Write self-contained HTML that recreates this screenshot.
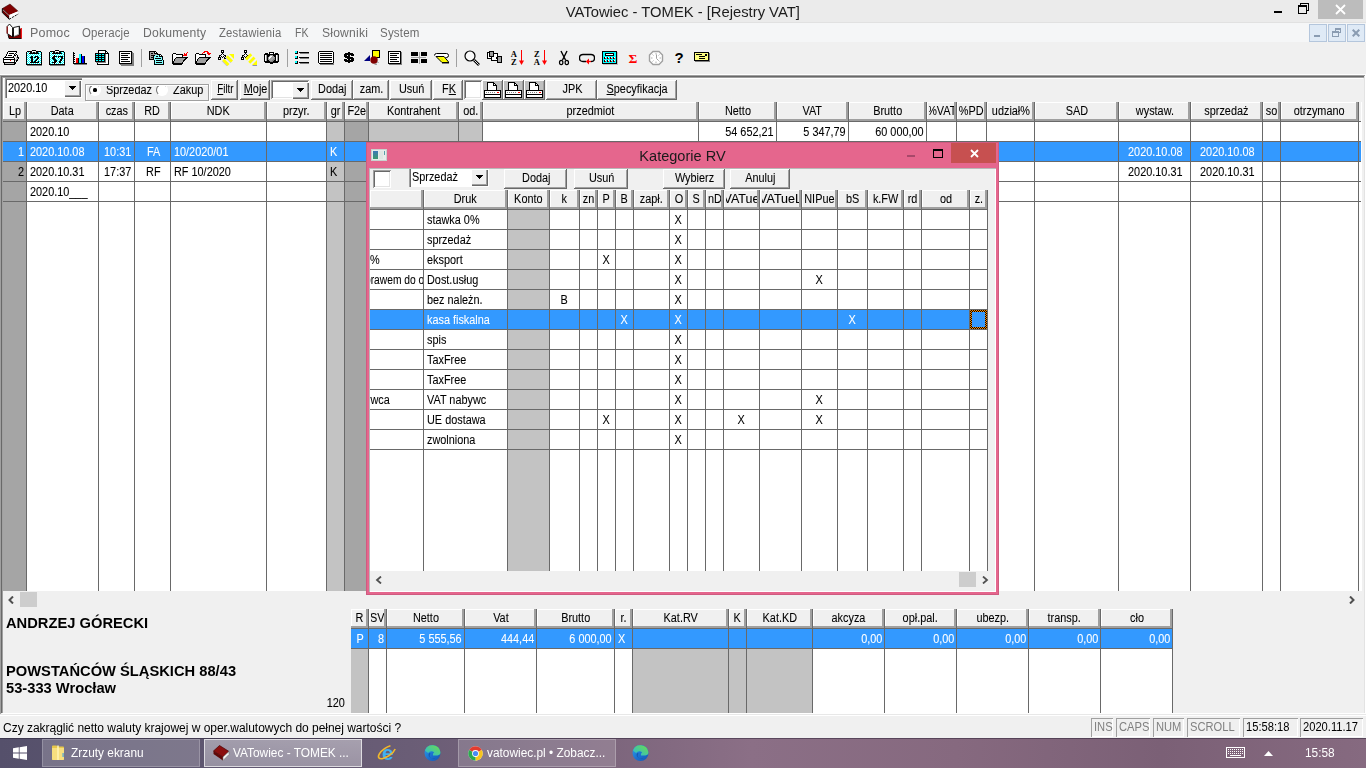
<!DOCTYPE html>
<html><head><meta charset="utf-8"><title>VATowiec</title><style>
*{box-sizing:border-box;margin:0;padding:0}
html,body{width:1366px;height:768px;overflow:hidden;background:#f0f0f0}
body{font-family:"Liberation Sans",sans-serif;position:relative}
body div,body svg{position:absolute}
.t{white-space:nowrap;color:#000;will-change:transform}
.t span{display:inline-block}
.g{font-size:12.5px;-webkit-text-stroke:.08px}
.g span{transform:scaleX(0.87)}
.l{text-align:left}.l span{transform-origin:0 50%}
.r{text-align:right}.r span{transform-origin:100% 50%}
.c{text-align:center;display:flex;justify-content:center}.c span{transform-origin:50% 50%;flex:none}
.title{font-size:15px;color:#1c1c1c}
.title span{transform:scaleX(.985)}
.menu{font-size:12.5px;color:#6d6d6d;letter-spacing:0.2px}
.b{font-size:14px;font-weight:bold}
.b span{transform:scaleX(1.05)}
.st{font-size:12px}
.sc span{transform:scaleX(.93)}
.tb{font-size:12.5px;color:#fff}
.dtitle{font-size:15px;color:#1a1a1a}
.dtitle span{transform:scaleX(.97)}
u{text-decoration:underline}
</style></head><body>
<div style="left:0px;top:0px;width:1366px;height:768px;background:#f0f0f0;"></div>
<div style="left:0px;top:0px;width:1366px;height:22px;background:#ebebeb;"></div>
<div style="left:0px;top:22px;width:1366px;height:1px;background:#e1e1e1;"></div>
<div class="t title c" style="left:0px;top:1px;width:1366px;height:22px;line-height:22px;"><span>VATowiec - TOMEK - [Rejestry VAT]</span></div>
<div style="left:1274px;top:11px;width:8px;height:2px;background:#000;"></div>
<svg style="left:1298px;top:3px" width="11" height="11" viewBox="0 0 11 11" shape-rendering="crispEdges"><path d="M2.5 2.5v-2h8v7h-2" fill="none" stroke="#000"/><rect x="0.5" y="3" width="8" height="7.5" fill="none" stroke="#000"/><rect x="0" y="2" width="9" height="2" fill="#000"/></svg>
<div style="left:1318px;top:0px;width:45px;height:19px;background:#bcbcbc;"></div>
<svg style="left:1335px;top:4px" width="11" height="11" viewBox="0 0 11 11"><path d="M1 1l9 9M10 1l-9 9" stroke="#fff" stroke-width="1.8"/></svg>
<div style="left:0px;top:23px;width:1366px;height:19px;background:#f5f6f7;"></div>
<div class="t menu l" style="left:30px;top:24px;width:100px;height:19px;line-height:19px"><span style="transform:scaleX(1.0)">Pomoc</span></div>
<div class="t menu l" style="left:82px;top:24px;width:100px;height:19px;line-height:19px"><span style="transform:scaleX(0.915)">Operacje</span></div>
<div class="t menu l" style="left:143px;top:24px;width:100px;height:19px;line-height:19px"><span style="transform:scaleX(0.975)">Dokumenty</span></div>
<div class="t menu l" style="left:218.5px;top:24px;width:100px;height:19px;line-height:19px"><span style="transform:scaleX(0.905)">Zestawienia</span></div>
<div class="t menu l" style="left:295.3px;top:24px;width:100px;height:19px;line-height:19px"><span style="transform:scaleX(0.84)">FK</span></div>
<div class="t menu l" style="left:322.2px;top:24px;width:100px;height:19px;line-height:19px"><span style="transform:scaleX(0.97)">Słowniki</span></div>
<div class="t menu l" style="left:380px;top:24px;width:100px;height:19px;line-height:19px"><span style="transform:scaleX(0.925)">System</span></div>
<div style="left:1309px;top:24px;width:18px;height:18px;background:#dfeaf6;box-shadow:inset 0 0 0 1px #b4c6dc;"></div>
<div style="left:1328px;top:24px;width:18px;height:18px;background:#dfeaf6;box-shadow:inset 0 0 0 1px #b4c6dc;"></div>
<div style="left:1347px;top:24px;width:18px;height:18px;background:#dfeaf6;box-shadow:inset 0 0 0 1px #b4c6dc;"></div>
<div style="left:1314px;top:35px;width:6px;height:2px;background:#8a9cb2;"></div>
<svg style="left:1332px;top:28px" width="10" height="9" viewBox="0 0 10 9" shape-rendering="crispEdges"><path d="M3 0h6v5h-2v-1h1v-2h-4v1h-1z" fill="#8a9cb2"/><path d="M0 3h7v6h-7zM1 5v3h5v-3z" fill="#8a9cb2" fill-rule="evenodd"/></svg>
<svg style="left:1352px;top:29px" width="8" height="8" viewBox="0 0 8 8"><path d="M0.7 0.7l6.6 6.6M7.3 0.7l-6.6 6.6" stroke="#8a9cb2" stroke-width="2"/></svg>
<div style="left:141px;top:49px;width:1px;height:18px;background:#a0a0a0;"></div>
<div style="left:287px;top:49px;width:1px;height:18px;background:#a0a0a0;"></div>
<div style="left:456px;top:49px;width:1px;height:18px;background:#a0a0a0;"></div>
<svg style="left:3px;top:51px" width="16" height="14" viewBox="0 0 16 14" shape-rendering="crispEdges"><path fill="#000" d="M5 0h9v1h-9zM4 1h1v1h-1zM13 1h1v1h-1zM4 2h1v1h-1zM6 2h5v1h-5zM12 2h1v1h-1zM3 3h1v1h-1zM11 3h1v1h-1zM13 3h1v1h-1zM3 4h1v1h-1zM5 4h4v1h-4zM11 4h2v1h-2zM14 4h1v1h-1zM2 5h1v1h-1zM10 5h1v1h-1zM14 5h1v1h-1zM1 6h10v1h-10zM14 6h2v1h-2zM0 7h1v1h-1zM11 7h1v1h-1zM15 7h1v1h-1zM0 8h12v1h-12zM14 8h1v1h-1zM0 9h1v1h-1zM11 9h1v1h-1zM13 9h2v1h-2zM0 10h1v1h-1zM11 10h1v1h-1zM13 10h1v1h-1zM0 11h13v1h-13zM1 12h1v1h-1zM11 12h2v1h-2zM1 13h11v1h-11z"/><path fill="#fff" d="M5 1h8v1h-8zM5 2h1v1h-1zM11 2h1v1h-1zM4 3h7v1h-7zM4 4h1v1h-1zM9 4h2v1h-2zM13 4h1v1h-1zM3 5h7v1h-7zM11 5h1v1h-1zM13 5h1v1h-1zM12 6h1v1h-1zM1 7h10v1h-10zM12 7h1v1h-1zM1 9h6v1h-6zM8 9h3v1h-3zM1 10h10v1h-10zM12 10h1v1h-1z"/><path fill="#c0c0c0" d="M12 5h1v1h-1zM11 6h1v1h-1zM13 6h1v1h-1zM13 7h2v1h-2zM12 8h2v1h-2zM12 9h1v1h-1zM2 12h9v1h-9z"/><path fill="#ff0000" d="M7 9h1v1h-1z"/></svg>
<svg style="left:26px;top:50px" width="16" height="16" viewBox="0 0 16 16" shape-rendering="crispEdges"><path fill="#000" d="M6 0h4v1h-4zM1 1h5v1h-5zM10 1h5v1h-5zM0 2h1v1h-1zM4 2h2v1h-2zM7 2h2v1h-2zM10 2h2v1h-2zM15 2h1v1h-1zM0 3h1v1h-1zM3 3h10v1h-10zM15 3h1v1h-1zM0 4h1v1h-1zM15 4h1v1h-1zM0 5h1v1h-1zM15 5h1v1h-1zM0 6h1v1h-1zM5 6h2v1h-2zM9 6h3v1h-3zM15 6h1v1h-1zM0 7h1v1h-1zM4 7h3v1h-3zM8 7h2v1h-2zM11 7h2v1h-2zM15 7h1v1h-1zM0 8h1v1h-1zM5 8h2v1h-2zM11 8h2v1h-2zM15 8h1v1h-1zM0 9h1v1h-1zM5 9h2v1h-2zM10 9h2v1h-2zM15 9h1v1h-1zM0 10h1v1h-1zM5 10h2v1h-2zM9 10h2v1h-2zM15 10h1v1h-1zM0 11h1v1h-1zM5 11h2v1h-2zM8 11h2v1h-2zM12 11h1v1h-1zM15 11h1v1h-1zM0 12h1v1h-1zM4 12h9v1h-9zM15 12h1v1h-1zM0 13h1v1h-1zM15 13h1v1h-1zM0 14h16v1h-16z"/><path fill="#fff" d="M6 1h4v1h-4zM1 2h1v1h-1zM3 2h1v1h-1zM13 2h1v1h-1zM2 3h1v1h-1zM14 3h1v1h-1zM1 4h1v1h-1zM3 4h1v1h-1zM5 4h1v1h-1zM7 4h1v1h-1zM9 4h1v1h-1zM11 4h1v1h-1zM13 4h1v1h-1zM2 5h1v1h-1zM4 5h1v1h-1zM6 5h1v1h-1zM8 5h1v1h-1zM10 5h1v1h-1zM12 5h1v1h-1zM14 5h1v1h-1zM1 6h1v1h-1zM3 6h1v1h-1zM7 6h1v1h-1zM13 6h1v1h-1zM2 7h1v1h-1zM10 7h1v1h-1zM14 7h1v1h-1zM1 8h1v1h-1zM3 8h1v1h-1zM7 8h1v1h-1zM9 8h1v1h-1zM13 8h1v1h-1zM2 9h1v1h-1zM4 9h1v1h-1zM8 9h1v1h-1zM12 9h1v1h-1zM14 9h1v1h-1zM1 10h1v1h-1zM3 10h1v1h-1zM7 10h1v1h-1zM11 10h1v1h-1zM13 10h1v1h-1zM2 11h1v1h-1zM4 11h1v1h-1zM10 11h1v1h-1zM14 11h1v1h-1zM1 12h1v1h-1zM3 12h1v1h-1zM13 12h1v1h-1zM2 13h1v1h-1zM4 13h1v1h-1zM6 13h1v1h-1zM8 13h1v1h-1zM10 13h1v1h-1zM12 13h1v1h-1zM14 13h1v1h-1z"/><path fill="#00ffff" d="M2 2h1v1h-1zM12 2h1v1h-1zM14 2h1v1h-1zM1 3h1v1h-1zM13 3h1v1h-1zM2 4h1v1h-1zM4 4h1v1h-1zM6 4h1v1h-1zM8 4h1v1h-1zM10 4h1v1h-1zM12 4h1v1h-1zM14 4h1v1h-1zM1 5h1v1h-1zM3 5h1v1h-1zM5 5h1v1h-1zM7 5h1v1h-1zM9 5h1v1h-1zM11 5h1v1h-1zM13 5h1v1h-1zM2 6h1v1h-1zM4 6h1v1h-1zM8 6h1v1h-1zM12 6h1v1h-1zM14 6h1v1h-1zM1 7h1v1h-1zM3 7h1v1h-1zM7 7h1v1h-1zM13 7h1v1h-1zM2 8h1v1h-1zM4 8h1v1h-1zM8 8h1v1h-1zM10 8h1v1h-1zM14 8h1v1h-1zM1 9h1v1h-1zM3 9h1v1h-1zM7 9h1v1h-1zM9 9h1v1h-1zM13 9h1v1h-1zM2 10h1v1h-1zM4 10h1v1h-1zM8 10h1v1h-1zM12 10h1v1h-1zM14 10h1v1h-1zM1 11h1v1h-1zM3 11h1v1h-1zM7 11h1v1h-1zM11 11h1v1h-1zM13 11h1v1h-1zM2 12h1v1h-1zM14 12h1v1h-1zM1 13h1v1h-1zM3 13h1v1h-1zM5 13h1v1h-1zM7 13h1v1h-1zM9 13h1v1h-1zM11 13h1v1h-1zM13 13h1v1h-1z"/><path fill="#a0a0a0" d="M6 2h1v1h-1zM9 2h1v1h-1z"/><path fill="#808080" d="M1 15h15v1h-15z"/></svg>
<svg style="left:49px;top:50px" width="16" height="16" viewBox="0 0 16 16" shape-rendering="crispEdges"><path fill="#000" d="M6 0h4v1h-4zM1 1h5v1h-5zM10 1h5v1h-5zM0 2h1v1h-1zM4 2h2v1h-2zM7 2h2v1h-2zM10 2h2v1h-2zM15 2h1v1h-1zM0 3h1v1h-1zM3 3h10v1h-10zM15 3h1v1h-1zM0 4h1v1h-1zM15 4h1v1h-1zM0 5h1v1h-1zM5 5h1v1h-1zM15 5h1v1h-1zM0 6h1v1h-1zM4 6h4v1h-4zM9 6h5v1h-5zM15 6h1v1h-1zM0 7h1v1h-1zM3 7h3v1h-3zM9 7h1v1h-1zM12 7h2v1h-2zM15 7h1v1h-1zM0 8h1v1h-1zM3 8h3v1h-3zM12 8h2v1h-2zM15 8h1v1h-1zM0 9h1v1h-1zM4 9h3v1h-3zM11 9h2v1h-2zM15 9h1v1h-1zM0 10h1v1h-1zM5 10h3v1h-3zM11 10h2v1h-2zM15 10h1v1h-1zM0 11h1v1h-1zM5 11h3v1h-3zM10 11h2v1h-2zM15 11h1v1h-1zM0 12h1v1h-1zM3 12h4v1h-4zM10 12h2v1h-2zM15 12h1v1h-1zM0 13h1v1h-1zM5 13h1v1h-1zM15 13h1v1h-1zM0 14h16v1h-16z"/><path fill="#fff" d="M6 1h4v1h-4zM1 2h1v1h-1zM3 2h1v1h-1zM13 2h1v1h-1zM2 3h1v1h-1zM14 3h1v1h-1zM1 4h1v1h-1zM3 4h1v1h-1zM5 4h1v1h-1zM7 4h1v1h-1zM9 4h1v1h-1zM11 4h1v1h-1zM13 4h1v1h-1zM2 5h1v1h-1zM4 5h1v1h-1zM6 5h1v1h-1zM8 5h1v1h-1zM10 5h1v1h-1zM12 5h1v1h-1zM14 5h1v1h-1zM1 6h1v1h-1zM3 6h1v1h-1zM2 7h1v1h-1zM6 7h1v1h-1zM8 7h1v1h-1zM10 7h1v1h-1zM14 7h1v1h-1zM1 8h1v1h-1zM7 8h1v1h-1zM9 8h1v1h-1zM11 8h1v1h-1zM2 9h1v1h-1zM8 9h1v1h-1zM10 9h1v1h-1zM14 9h1v1h-1zM1 10h1v1h-1zM3 10h1v1h-1zM9 10h1v1h-1zM13 10h1v1h-1zM2 11h1v1h-1zM4 11h1v1h-1zM8 11h1v1h-1zM12 11h1v1h-1zM14 11h1v1h-1zM1 12h1v1h-1zM7 12h1v1h-1zM9 12h1v1h-1zM13 12h1v1h-1zM2 13h1v1h-1zM4 13h1v1h-1zM6 13h1v1h-1zM8 13h1v1h-1zM10 13h1v1h-1zM12 13h1v1h-1zM14 13h1v1h-1z"/><path fill="#00ffff" d="M2 2h1v1h-1zM12 2h1v1h-1zM14 2h1v1h-1zM1 3h1v1h-1zM13 3h1v1h-1zM2 4h1v1h-1zM4 4h1v1h-1zM6 4h1v1h-1zM8 4h1v1h-1zM10 4h1v1h-1zM12 4h1v1h-1zM14 4h1v1h-1zM1 5h1v1h-1zM3 5h1v1h-1zM7 5h1v1h-1zM9 5h1v1h-1zM11 5h1v1h-1zM13 5h1v1h-1zM2 6h1v1h-1zM8 6h1v1h-1zM14 6h1v1h-1zM1 7h1v1h-1zM7 7h1v1h-1zM11 7h1v1h-1zM2 8h1v1h-1zM6 8h1v1h-1zM8 8h1v1h-1zM10 8h1v1h-1zM14 8h1v1h-1zM1 9h1v1h-1zM3 9h1v1h-1zM7 9h1v1h-1zM9 9h1v1h-1zM13 9h1v1h-1zM2 10h1v1h-1zM4 10h1v1h-1zM8 10h1v1h-1zM10 10h1v1h-1zM14 10h1v1h-1zM1 11h1v1h-1zM3 11h1v1h-1zM9 11h1v1h-1zM13 11h1v1h-1zM2 12h1v1h-1zM8 12h1v1h-1zM12 12h1v1h-1zM14 12h1v1h-1zM1 13h1v1h-1zM3 13h1v1h-1zM7 13h1v1h-1zM9 13h1v1h-1zM11 13h1v1h-1zM13 13h1v1h-1z"/><path fill="#a0a0a0" d="M6 2h1v1h-1zM9 2h1v1h-1z"/><path fill="#808080" d="M1 15h15v1h-15z"/></svg>
<svg style="left:72px;top:50px" width="16" height="16" viewBox="0 0 16 16" shape-rendering="crispEdges"><path fill="#000" d="M1 2h1v1h-1zM1 3h2v1h-2zM1 4h1v1h-1zM9 4h1v1h-1zM1 5h2v1h-2zM9 5h1v1h-1zM1 6h1v1h-1zM9 6h1v1h-1zM12 6h1v1h-1zM1 7h2v1h-2zM9 7h1v1h-1zM12 7h1v1h-1zM1 8h1v1h-1zM6 8h1v1h-1zM9 8h1v1h-1zM12 8h1v1h-1zM1 9h2v1h-2zM6 9h1v1h-1zM9 9h1v1h-1zM12 9h1v1h-1zM1 10h1v1h-1zM6 10h1v1h-1zM9 10h1v1h-1zM12 10h1v1h-1zM1 11h2v1h-2zM6 11h1v1h-1zM9 11h1v1h-1zM12 11h1v1h-1zM1 12h1v1h-1zM6 12h1v1h-1zM9 12h1v1h-1zM12 12h1v1h-1zM1 13h14v1h-14z"/><path fill="#00ffff" d="M7 4h2v1h-2zM7 5h2v1h-2zM7 6h2v1h-2zM7 7h2v1h-2zM7 8h2v1h-2zM7 9h2v1h-2zM7 10h2v1h-2zM7 11h2v1h-2zM7 12h2v1h-2z"/><path fill="#0000ff" d="M10 6h2v1h-2zM10 7h2v1h-2zM10 8h2v1h-2zM10 9h2v1h-2zM10 10h2v1h-2zM10 11h2v1h-2zM10 12h2v1h-2z"/><path fill="#ff0000" d="M4 8h2v1h-2zM4 9h2v1h-2zM4 10h2v1h-2zM4 11h2v1h-2zM4 12h2v1h-2z"/><path fill="#808080" d="M2 14h13v1h-13z"/></svg>
<svg style="left:95px;top:50px" width="16" height="16" viewBox="0 0 16 16" shape-rendering="crispEdges"><path fill="#000" d="M3 0h8v1h-8zM3 1h1v1h-1zM10 1h2v1h-2zM3 2h1v1h-1zM10 2h1v1h-1zM12 2h1v1h-1zM0 3h14v1h-14zM0 4h1v1h-1zM3 4h1v1h-1zM6 4h1v1h-1zM9 4h1v1h-1zM13 4h1v1h-1zM0 5h10v1h-10zM13 5h1v1h-1zM0 6h1v1h-1zM3 6h1v1h-1zM6 6h1v1h-1zM9 6h1v1h-1zM13 6h1v1h-1zM0 7h10v1h-10zM13 7h1v1h-1zM0 8h1v1h-1zM3 8h1v1h-1zM6 8h1v1h-1zM9 8h1v1h-1zM13 8h1v1h-1zM0 9h10v1h-10zM13 9h1v1h-1zM0 10h1v1h-1zM3 10h1v1h-1zM6 10h1v1h-1zM9 10h1v1h-1zM13 10h1v1h-1zM0 11h10v1h-10zM13 11h1v1h-1zM13 12h1v1h-1zM2 13h1v1h-1zM13 13h1v1h-1zM2 14h12v1h-12z"/><path fill="#fff" d="M4 1h6v1h-6zM4 2h6v1h-6zM11 2h1v1h-1zM11 4h2v1h-2zM11 5h2v1h-2zM11 6h2v1h-2zM11 7h2v1h-2zM11 8h2v1h-2zM11 9h2v1h-2zM11 10h2v1h-2zM11 11h2v1h-2zM11 12h2v1h-2zM3 13h10v1h-10z"/><path fill="#00ffff" d="M1 4h2v1h-2zM4 4h2v1h-2zM7 4h2v1h-2zM1 6h2v1h-2zM4 6h2v1h-2zM7 6h2v1h-2zM1 8h2v1h-2zM4 8h2v1h-2zM7 8h2v1h-2zM1 10h2v1h-2zM4 10h2v1h-2zM7 10h2v1h-2z"/><path fill="#808080" d="M10 4h1v1h-1zM10 5h1v1h-1zM10 6h1v1h-1zM10 7h1v1h-1zM10 8h1v1h-1zM10 9h1v1h-1zM10 10h1v1h-1zM10 11h1v1h-1zM1 12h10v1h-10z"/></svg>
<svg style="left:118px;top:50px" width="16" height="16" viewBox="0 0 16 16" shape-rendering="crispEdges"><path fill="#000" d="M1 1h13v1h-13zM1 2h1v1h-1zM13 2h1v1h-1zM1 3h1v1h-1zM3 3h9v1h-9zM13 3h1v1h-1zM1 4h1v1h-1zM13 4h1v1h-1zM1 5h1v1h-1zM3 5h7v1h-7zM13 5h1v1h-1zM1 6h1v1h-1zM13 6h1v1h-1zM1 7h1v1h-1zM3 7h9v1h-9zM13 7h1v1h-1zM1 8h1v1h-1zM13 8h1v1h-1zM1 9h1v1h-1zM3 9h7v1h-7zM13 9h1v1h-1zM1 10h1v1h-1zM13 10h1v1h-1zM1 11h1v1h-1zM3 11h9v1h-9zM13 11h1v1h-1zM1 12h1v1h-1zM13 12h1v1h-1zM1 13h13v1h-13z"/><path fill="#fff" d="M2 2h11v1h-11zM2 3h1v1h-1zM12 3h1v1h-1zM2 4h11v1h-11zM2 5h1v1h-1zM10 5h3v1h-3zM2 6h11v1h-11zM2 7h1v1h-1zM12 7h1v1h-1zM2 8h11v1h-11zM2 9h1v1h-1zM10 9h3v1h-3zM2 10h11v1h-11zM2 11h1v1h-1zM12 11h1v1h-1zM2 12h11v1h-11z"/><path fill="#808080" d="M14 2h1v1h-1zM14 3h2v1h-2zM14 4h2v1h-2zM14 5h2v1h-2zM14 6h2v1h-2zM14 7h2v1h-2zM14 8h2v1h-2zM14 9h2v1h-2zM14 10h2v1h-2zM14 11h2v1h-2zM14 12h2v1h-2zM14 13h2v1h-2zM2 14h14v1h-14zM3 15h13v1h-13z"/></svg>
<svg style="left:149px;top:50px" width="16" height="16" viewBox="0 0 16 16" shape-rendering="crispEdges"><path fill="#000" d="M0 1h7v1h-7zM0 2h1v1h-1zM5 2h1v1h-1zM7 2h1v1h-1zM0 3h1v1h-1zM2 3h2v1h-2zM5 3h4v1h-4zM0 4h1v1h-1zM8 4h4v1h-4zM0 5h1v1h-1zM2 5h4v1h-4zM10 5h1v1h-1zM12 5h1v1h-1zM0 6h1v1h-1zM4 6h1v1h-1zM7 6h2v1h-2zM10 6h4v1h-4zM0 7h1v1h-1zM2 7h3v1h-3zM13 7h1v1h-1zM0 8h1v1h-1zM4 8h1v1h-1zM6 8h6v1h-6zM13 8h1v1h-1zM0 9h5v1h-5zM13 9h1v1h-1zM5 10h1v1h-1zM7 10h6v1h-6zM14 10h1v1h-1zM5 11h1v1h-1zM14 11h1v1h-1zM5 12h1v1h-1zM7 12h6v1h-6zM14 12h1v1h-1zM5 13h1v1h-1zM14 13h1v1h-1zM5 14h10v1h-10z"/><path fill="#a0a0a0" d="M1 2h4v1h-4zM1 3h1v1h-1zM4 3h1v1h-1zM1 4h7v1h-7zM1 5h1v1h-1zM1 6h3v1h-3zM1 7h1v1h-1zM1 8h3v1h-3z"/><path fill="#fff" d="M6 2h1v1h-1zM11 5h1v1h-1z"/><path fill="#80ffff" d="M6 5h4v1h-4zM5 6h2v1h-2zM9 6h1v1h-1zM5 7h8v1h-8zM5 8h1v1h-1zM12 8h1v1h-1zM5 9h8v1h-8zM6 10h1v1h-1zM13 10h1v1h-1zM6 11h8v1h-8zM6 12h1v1h-1zM13 12h1v1h-1zM6 13h8v1h-8z"/></svg>
<svg style="left:172px;top:50px" width="16" height="16" viewBox="0 0 16 16" shape-rendering="crispEdges"><path fill="#ff0000" d="M15 2h1v1h-1zM12 3h1v1h-1zM14 3h1v1h-1zM12 4h3v1h-3zM11 5h4v1h-4z"/><path fill="#000" d="M1 3h3v1h-3zM0 4h1v1h-1zM4 4h7v1h-7zM0 5h1v1h-1zM10 5h1v1h-1zM0 6h1v1h-1zM10 6h1v1h-1zM0 7h1v1h-1zM4 7h12v1h-12zM0 8h1v1h-1zM3 8h1v1h-1zM13 8h2v1h-2zM0 9h1v1h-1zM2 9h1v1h-1zM12 9h2v1h-2zM0 10h1v1h-1zM2 10h1v1h-1zM11 10h2v1h-2zM0 11h2v1h-2zM11 11h1v1h-1zM0 12h2v1h-2zM10 12h1v1h-1zM0 13h11v1h-11zM1 14h9v1h-9z"/><path fill="#fff" d="M1 4h3v1h-3zM1 5h9v1h-9zM1 6h9v1h-9zM1 7h3v1h-3zM1 8h2v1h-2zM1 9h1v1h-1zM1 10h1v1h-1z"/><path fill="#a0a0a0" d="M4 8h9v1h-9zM3 9h9v1h-9zM3 10h8v1h-8zM2 11h9v1h-9zM2 12h8v1h-8z"/></svg>
<svg style="left:195px;top:50px" width="16" height="16" viewBox="0 0 16 16" shape-rendering="crispEdges"><path fill="#ff0000" d="M9 1h4v1h-4zM8 2h2v1h-2zM12 2h2v1h-2zM7 3h1v1h-1zM12 3h4v1h-4zM13 4h2v1h-2z"/><path fill="#000" d="M1 3h3v1h-3zM0 4h1v1h-1zM4 4h7v1h-7zM0 5h1v1h-1zM10 5h1v1h-1zM0 6h1v1h-1zM10 6h1v1h-1zM0 7h1v1h-1zM4 7h12v1h-12zM0 8h1v1h-1zM3 8h1v1h-1zM13 8h2v1h-2zM0 9h1v1h-1zM2 9h1v1h-1zM12 9h2v1h-2zM0 10h1v1h-1zM2 10h1v1h-1zM11 10h2v1h-2zM0 11h2v1h-2zM11 11h1v1h-1zM0 12h2v1h-2zM10 12h1v1h-1zM0 13h11v1h-11zM1 14h9v1h-9z"/><path fill="#fff" d="M1 4h3v1h-3zM1 5h9v1h-9zM1 6h9v1h-9zM1 7h3v1h-3zM1 8h2v1h-2zM1 9h1v1h-1zM1 10h1v1h-1z"/><path fill="#a0a0a0" d="M4 8h9v1h-9zM3 9h9v1h-9zM3 10h8v1h-8zM2 11h9v1h-9zM2 12h8v1h-8z"/></svg>
<svg style="left:218px;top:50px" width="16" height="16" viewBox="0 0 16 16"><g shape-rendering="crispEdges"><path fill="#000" d="M3 0h3v1h-3zM3 1h1v1h-1zM5 1h1v1h-1zM3 2h3v1h-3zM4 3h1v1h-1zM3 4h1v1h-1zM5 4h1v1h-1zM1 5h2v1h-2zM6 5h2v1h-2zM1 6h1v1h-1zM3 6h1v1h-1zM5 6h1v1h-1zM7 6h1v1h-1zM0 7h3v1h-3zM4 7h1v1h-1zM6 7h1v1h-1zM0 8h1v1h-1zM2 8h1v1h-1zM6 8h2v1h-2zM0 9h3v1h-3z"/><path fill="#fff" d="M4 1h1v1h-1zM4 5h1v1h-1zM1 8h1v1h-1z"/></g><g fill="#ff0"><path d="M11 4h5v5z"/><path d="M7.75 7.25L9.75 5.25L15 10.5L13 12.5z"/><path d="M4.25 10.75L6.25 8.75L11.5 14L9.5 16z"/></g><path d="M7.5 7.6l5.3 5.3M4 11.1l5.3 5.3" stroke="#9090d0" stroke-width=".5"/></svg>
<svg style="left:241px;top:50px" width="16" height="16" viewBox="0 0 16 16"><g shape-rendering="crispEdges"><path fill="#000" d="M3 0h3v1h-3zM3 1h1v1h-1zM5 1h1v1h-1zM3 2h3v1h-3zM4 3h1v1h-1zM3 4h1v1h-1zM5 4h1v1h-1zM1 5h2v1h-2zM6 5h3v1h-3zM1 6h1v1h-1zM3 6h1v1h-1zM5 6h1v1h-1zM0 7h3v1h-3zM4 7h1v1h-1zM0 8h1v1h-1zM2 8h1v1h-1zM0 9h3v1h-3z"/><path fill="#fff" d="M4 1h1v1h-1zM4 5h1v1h-1zM1 8h1v1h-1z"/></g><g fill="#ff0"><path d="M11 15h5v-5z"/><path d="M7.25 11.75L9.25 13.75L14.5 8.5L12.5 6.5z"/><path d="M4 8.5L6 10.5L11.25 5.25L9.25 3.25z"/></g><path d="M11.5 15.5h4.5" stroke="#9090b0" stroke-width="1"/></svg>
<svg style="left:264px;top:50px" width="16" height="16" viewBox="0 0 16 16" shape-rendering="crispEdges"><path fill="#000" d="M5 2h5v1h-5zM1 3h3v1h-3zM5 3h1v1h-1zM9 3h1v1h-1zM11 3h3v1h-3zM0 4h15v1h-15zM0 5h1v1h-1zM3 5h3v1h-3zM9 5h3v1h-3zM14 5h1v1h-1zM0 6h1v1h-1zM3 6h2v1h-2zM10 6h2v1h-2zM14 6h1v1h-1zM0 7h1v1h-1zM3 7h1v1h-1zM11 7h1v1h-1zM14 7h1v1h-1zM0 8h1v1h-1zM3 8h1v1h-1zM11 8h1v1h-1zM14 8h1v1h-1zM0 9h1v1h-1zM3 9h1v1h-1zM11 9h1v1h-1zM14 9h1v1h-1zM0 10h1v1h-1zM3 10h2v1h-2zM10 10h2v1h-2zM14 10h1v1h-1zM0 11h6v1h-6zM9 11h6v1h-6zM1 12h13v1h-13zM6 13h3v1h-3z"/><path fill="#fff" d="M6 3h3v1h-3zM1 5h1v1h-1zM12 5h1v1h-1zM1 6h1v1h-1zM6 6h2v1h-2zM12 6h1v1h-1zM1 7h1v1h-1zM5 7h2v1h-2zM12 7h1v1h-1zM1 8h1v1h-1zM5 8h1v1h-1zM12 8h1v1h-1zM1 9h1v1h-1zM12 9h1v1h-1zM1 10h1v1h-1zM12 10h1v1h-1z"/><path fill="#a0a0a0" d="M2 5h1v1h-1zM6 5h3v1h-3zM13 5h1v1h-1zM2 6h1v1h-1zM5 6h1v1h-1zM8 6h2v1h-2zM13 6h1v1h-1zM2 7h1v1h-1zM4 7h1v1h-1zM7 7h4v1h-4zM13 7h1v1h-1zM2 8h1v1h-1zM4 8h1v1h-1zM6 8h4v1h-4zM13 8h1v1h-1zM2 9h1v1h-1zM4 9h5v1h-5zM13 9h1v1h-1zM2 10h1v1h-1zM5 10h3v1h-3zM13 10h1v1h-1z"/><path fill="#808080" d="M10 8h1v1h-1zM9 9h2v1h-2zM8 10h2v1h-2zM6 11h3v1h-3z"/></svg>
<svg style="left:295px;top:50px" width="16" height="16" viewBox="0 0 16 16" shape-rendering="crispEdges"><path fill="#00ffff" d="M0 1h2v1h-2zM0 2h2v1h-2zM0 6h2v1h-2zM0 7h2v1h-2zM0 11h2v1h-2zM0 12h2v1h-2z"/><path fill="#000" d="M2 1h1v1h-1zM2 2h1v1h-1zM4 2h10v1h-10zM0 3h3v1h-3zM2 6h1v1h-1zM2 7h1v1h-1zM4 7h10v1h-10zM0 8h3v1h-3zM2 11h1v1h-1zM2 12h1v1h-1zM4 12h10v1h-10zM0 13h3v1h-3z"/><path fill="#808080" d="M5 3h9v1h-9zM5 8h9v1h-9zM5 13h9v1h-9z"/></svg>
<svg style="left:318px;top:50px" width="16" height="16" viewBox="0 0 16 16" shape-rendering="crispEdges"><path fill="#000" d="M1 1h14v1h-14zM0 2h1v1h-1zM15 2h1v1h-1zM0 3h1v1h-1zM2 3h12v1h-12zM15 3h1v1h-1zM0 4h1v1h-1zM15 4h1v1h-1zM0 5h1v1h-1zM2 5h12v1h-12zM15 5h1v1h-1zM0 6h1v1h-1zM15 6h1v1h-1zM0 7h1v1h-1zM2 7h12v1h-12zM15 7h1v1h-1zM0 8h1v1h-1zM15 8h1v1h-1zM0 9h1v1h-1zM2 9h12v1h-12zM15 9h1v1h-1zM0 10h1v1h-1zM15 10h1v1h-1zM0 11h1v1h-1zM2 11h12v1h-12zM15 11h1v1h-1zM0 12h1v1h-1zM15 12h1v1h-1zM1 13h14v1h-14z"/><path fill="#fff" d="M1 2h14v1h-14zM1 3h1v1h-1zM14 3h1v1h-1zM1 4h14v1h-14zM1 5h1v1h-1zM14 5h1v1h-1zM1 6h14v1h-14zM1 7h1v1h-1zM14 7h1v1h-1zM1 8h14v1h-14zM1 9h1v1h-1zM14 9h1v1h-1zM1 10h14v1h-14zM1 11h1v1h-1zM14 11h1v1h-1zM1 12h14v1h-14z"/><path fill="#808080" d="M15 13h1v1h-1zM2 14h14v1h-14z"/></svg>
<svg style="left:341px;top:50px" width="16" height="16" viewBox="0 0 16 16" shape-rendering="crispEdges"><path fill="#000" d="M7 2h2v1h-2zM4 3h8v1h-8zM3 4h10v1h-10zM3 5h3v1h-3zM7 5h2v1h-2zM10 5h3v1h-3zM3 6h6v1h-6zM4 7h8v1h-8zM6 8h7v1h-7zM3 9h3v1h-3zM7 9h2v1h-2zM10 9h3v1h-3zM3 10h10v1h-10zM4 11h8v1h-8zM7 12h2v1h-2z"/></svg>
<svg style="left:364px;top:50px" width="16" height="16" viewBox="0 0 16 16"><path d="M0 11l6-6v6z" fill="#000080"/><rect x="8.5" y="0.5" width="7" height="7" fill="#ff0" stroke="#000"/><circle cx="10" cy="10" r="3.7" fill="#800000"/><path d="M13.5 11.5l.8 1.5M10.5 14.2h2.5" stroke="#808080"/></svg>
<svg style="left:387px;top:50px" width="16" height="16" viewBox="0 0 16 16" shape-rendering="crispEdges"><path fill="#000" d="M1 1h13v1h-13zM1 2h1v1h-1zM13 2h1v1h-1zM1 3h1v1h-1zM3 3h9v1h-9zM13 3h1v1h-1zM1 4h1v1h-1zM13 4h1v1h-1zM1 5h1v1h-1zM3 5h7v1h-7zM13 5h1v1h-1zM1 6h1v1h-1zM13 6h1v1h-1zM1 7h1v1h-1zM3 7h9v1h-9zM13 7h1v1h-1zM1 8h1v1h-1zM13 8h1v1h-1zM1 9h1v1h-1zM3 9h7v1h-7zM13 9h1v1h-1zM1 10h1v1h-1zM13 10h1v1h-1zM1 11h1v1h-1zM3 11h9v1h-9zM13 11h1v1h-1zM1 12h1v1h-1zM13 12h1v1h-1zM1 13h13v1h-13z"/><path fill="#fff" d="M2 2h11v1h-11zM2 3h1v1h-1zM12 3h1v1h-1zM2 4h11v1h-11zM2 5h1v1h-1zM10 5h3v1h-3zM2 6h11v1h-11zM2 7h1v1h-1zM12 7h1v1h-1zM2 8h11v1h-11zM2 9h1v1h-1zM10 9h3v1h-3zM2 10h11v1h-11zM2 11h1v1h-1zM12 11h1v1h-1zM2 12h11v1h-11z"/><path fill="#808080" d="M14 2h1v1h-1zM14 3h1v1h-1zM14 4h1v1h-1zM14 5h1v1h-1zM14 6h1v1h-1zM14 7h1v1h-1zM14 8h1v1h-1zM14 9h1v1h-1zM14 10h1v1h-1zM14 11h1v1h-1zM14 12h1v1h-1zM14 13h1v1h-1zM2 14h13v1h-13z"/></svg>
<svg style="left:410px;top:50px" width="17" height="16" viewBox="0 0 17 16" shape-rendering="crispEdges"><path fill="#000" d="M1 2h7v1h-7zM11 2h6v1h-6zM1 3h7v1h-7zM11 3h6v1h-6zM1 4h7v1h-7zM11 4h6v1h-6zM1 5h7v1h-7zM11 5h6v1h-6zM1 9h7v1h-7zM11 9h6v1h-6zM1 10h7v1h-7zM11 10h6v1h-6zM1 11h7v1h-7zM11 11h6v1h-6zM1 12h7v1h-7zM11 12h6v1h-6z"/><path fill="#a0a0a0" d="M9 2h1v1h-1zM9 3h1v1h-1zM9 4h1v1h-1zM9 5h1v1h-1zM9 6h1v1h-1zM1 7h15v1h-15zM9 8h1v1h-1zM9 9h1v1h-1zM9 10h1v1h-1zM9 11h1v1h-1zM9 12h1v1h-1zM9 13h1v1h-1z"/></svg>
<svg style="left:433px;top:50px" width="16" height="16" viewBox="0 0 16 16"><path d="M1.5 5.5q0-2 2-2h10q2 0 2 2t-2 2h-1" fill="#fff" stroke="#000"/><path d="M3 6.5h8l5 6h-7z" fill="#ff0" stroke="#000"/><path d="M9 13.5h7" stroke="#808080"/><path d="M8 8.5l2 2" stroke="#d0d000"/></svg>
<svg style="left:464px;top:50px" width="16" height="16" viewBox="0 0 16 16"><circle cx="6" cy="6" r="5" fill="#fff" fill-opacity=".6" stroke="#000" stroke-width="1.2"/><path d="M10 10l5 5" stroke="#000" stroke-width="2.6"/><path d="M10.3 10.3l4.4 4.4" stroke="#fff" stroke-width="0.9"/></svg>
<svg style="left:487px;top:50px" width="16" height="16" viewBox="0 0 16 16" shape-rendering="crispEdges"><path fill="#000" d="M2 1h5v1h-5zM0 2h3v1h-3zM6 2h1v1h-1zM0 3h1v1h-1zM2 3h1v1h-1zM6 3h5v1h-5zM0 4h1v1h-1zM2 4h1v1h-1zM6 4h1v1h-1zM10 4h1v1h-1zM0 5h1v1h-1zM2 5h1v1h-1zM6 5h1v1h-1zM10 5h1v1h-1zM0 6h1v1h-1zM2 6h5v1h-5zM10 6h5v1h-5zM0 7h1v1h-1zM4 7h1v1h-1zM9 7h2v1h-2zM14 7h1v1h-1zM0 8h5v1h-5zM9 8h2v1h-2zM14 8h1v1h-1zM4 9h1v1h-1zM10 9h1v1h-1zM14 9h1v1h-1zM4 10h7v1h-7zM14 10h1v1h-1zM10 11h1v1h-1zM14 11h1v1h-1zM10 12h5v1h-5z"/><path fill="#a0a0a0" d="M3 2h3v1h-3zM3 3h3v1h-3zM3 4h3v1h-3zM3 5h3v1h-3zM11 7h3v1h-3zM11 8h3v1h-3zM11 9h3v1h-3zM11 10h3v1h-3zM11 11h3v1h-3z"/><path fill="#fff" d="M1 3h1v1h-1zM1 4h1v1h-1zM7 4h3v1h-3zM1 5h1v1h-1zM7 5h3v1h-3zM1 6h1v1h-1zM7 6h3v1h-3zM1 7h3v1h-3zM5 7h4v1h-4zM5 8h4v1h-4zM5 9h5v1h-5z"/></svg>
<svg style="left:510px;top:50px" width="16" height="16" viewBox="0 0 16 16"><text x="3.8" y="7" font-family="Liberation Serif" font-weight="bold" font-size="8.5" text-anchor="middle" fill="#000">A</text><text x="3.8" y="15" font-family="Liberation Serif" font-weight="bold" font-size="8.5" text-anchor="middle" fill="#000">Z</text><path d="M11.5 0v12" stroke="#f00" stroke-width="1"/><path d="M9 10.5h5l-2.5 4.5z" fill="#f00"/></svg>
<svg style="left:533px;top:50px" width="16" height="16" viewBox="0 0 16 16"><text x="3.8" y="7" font-family="Liberation Serif" font-weight="bold" font-size="8.5" text-anchor="middle" fill="#000">Z</text><text x="3.8" y="15" font-family="Liberation Serif" font-weight="bold" font-size="8.5" text-anchor="middle" fill="#000">A</text><path d="M11.5 0v12" stroke="#f00" stroke-width="1"/><path d="M9 10.5h5l-2.5 4.5z" fill="#f00"/></svg>
<svg style="left:556px;top:50px" width="16" height="16" viewBox="0 0 16 16"><path d="M5 1l4.5 9M11 1l-4.5 9" stroke="#000" stroke-width="1.4" fill="none"/><ellipse cx="5.2" cy="12.5" rx="1.7" ry="2.2" fill="none" stroke="#000" stroke-width="1.2"/><ellipse cx="10.8" cy="12.5" rx="1.7" ry="2.2" fill="none" stroke="#000" stroke-width="1.2"/></svg>
<svg style="left:579px;top:50px" width="16" height="16" viewBox="0 0 16 16"><path d="M7 11.5h-3q-3.5 0-3.5-3.5t3.5-3.5h8q3.5 0 3.5 3.5t-3.5 3.5" fill="none" stroke="#000" stroke-width="1.3"/><path d="M8 11.5h4" stroke="#f00" stroke-width="1.3"/><path d="M10 8.5v6l-3.2-3z" fill="#f00"/></svg>
<svg style="left:602px;top:50px" width="16" height="16" viewBox="0 0 16 16" shape-rendering="crispEdges"><path fill="#000" d="M0 1h15v1h-15zM0 2h1v1h-1zM14 2h1v1h-1zM0 3h1v1h-1zM3 3h9v1h-9zM14 3h1v1h-1zM0 4h1v1h-1zM3 4h1v1h-1zM11 4h1v1h-1zM14 4h1v1h-1zM0 5h1v1h-1zM3 5h9v1h-9zM14 5h1v1h-1zM0 6h1v1h-1zM14 6h1v1h-1zM0 7h1v1h-1zM2 7h1v1h-1zM5 7h1v1h-1zM8 7h1v1h-1zM11 7h1v1h-1zM14 7h1v1h-1zM0 8h1v1h-1zM2 8h1v1h-1zM5 8h1v1h-1zM8 8h1v1h-1zM11 8h1v1h-1zM14 8h1v1h-1zM0 9h1v1h-1zM14 9h1v1h-1zM0 10h1v1h-1zM2 10h1v1h-1zM5 10h1v1h-1zM8 10h1v1h-1zM11 10h1v1h-1zM14 10h1v1h-1zM0 11h1v1h-1zM2 11h1v1h-1zM5 11h1v1h-1zM8 11h1v1h-1zM11 11h1v1h-1zM14 11h1v1h-1zM0 12h1v1h-1zM14 12h1v1h-1zM0 13h15v1h-15z"/><path fill="#00ffff" d="M1 2h13v1h-13zM1 3h2v1h-2zM12 3h2v1h-2zM1 4h2v1h-2zM12 4h2v1h-2zM1 5h2v1h-2zM12 5h2v1h-2zM1 6h13v1h-13zM1 7h1v1h-1zM4 7h1v1h-1zM7 7h1v1h-1zM10 7h1v1h-1zM13 7h1v1h-1zM1 8h1v1h-1zM4 8h1v1h-1zM7 8h1v1h-1zM10 8h1v1h-1zM13 8h1v1h-1zM1 9h13v1h-13zM1 10h1v1h-1zM4 10h1v1h-1zM7 10h1v1h-1zM10 10h1v1h-1zM13 10h1v1h-1zM1 11h1v1h-1zM4 11h1v1h-1zM7 11h1v1h-1zM10 11h1v1h-1zM13 11h1v1h-1zM1 12h13v1h-13z"/><path fill="#c0c0c0" d="M15 2h1v1h-1zM15 3h1v1h-1zM15 4h1v1h-1zM15 5h1v1h-1zM15 6h1v1h-1zM15 7h1v1h-1zM15 8h1v1h-1zM15 9h1v1h-1zM15 10h1v1h-1zM15 11h1v1h-1zM15 12h1v1h-1zM15 13h1v1h-1zM1 14h15v1h-15z"/><path fill="#fff" d="M4 4h7v1h-7zM3 7h1v1h-1zM6 7h1v1h-1zM9 7h1v1h-1zM12 7h1v1h-1zM3 10h1v1h-1zM6 10h1v1h-1zM9 10h1v1h-1zM12 10h1v1h-1z"/><path fill="#ff0000" d="M3 8h1v1h-1zM6 8h1v1h-1zM9 8h1v1h-1zM12 8h1v1h-1zM3 11h1v1h-1zM6 11h1v1h-1zM9 11h1v1h-1zM12 11h1v1h-1z"/></svg>
<svg style="left:625px;top:50px" width="16" height="16" viewBox="0 0 16 16"><text x="8" y="12.7" font-family="Liberation Serif" font-weight="bold" font-size="13.5" text-anchor="middle" fill="#f00">Σ</text></svg>
<svg style="left:648px;top:50px" width="16" height="16" viewBox="0 0 16 16"><path d="M5 1.5h6l3.5 3.5v6l-3.5 3.5h-6l-3.5-3.5v-6z" fill="#fff" stroke="#a0a0a0" stroke-width="1.4"/><path d="M8 3v1.5M8 11.5v1.5M3 8h1.5M11.5 8h1.5M4.5 4.5l1 1M11.5 4.5l-1 1M4.5 11.5l1-1M11.5 11.5l-1-1" stroke="#b0b0b0"/><path d="M8.5 4.5v4l2 2" stroke="#a0a0a0" fill="none"/></svg>
<svg style="left:671px;top:50px" width="16" height="16" viewBox="0 0 16 16"><text x="8" y="13" font-family="Liberation Sans" font-weight="bold" font-size="15" text-anchor="middle" fill="#000">?</text></svg>
<svg style="left:694px;top:50px" width="16" height="16" viewBox="0 0 16 16" shape-rendering="crispEdges"><path fill="#000" d="M0 2h15v1h-15zM0 3h1v1h-1zM14 3h1v1h-1zM0 4h1v1h-1zM2 4h6v1h-6zM11 4h2v1h-2zM14 4h1v1h-1zM0 5h1v1h-1zM11 5h2v1h-2zM14 5h1v1h-1zM0 6h1v1h-1zM5 6h6v1h-6zM14 6h1v1h-1zM0 7h1v1h-1zM14 7h1v1h-1zM0 8h1v1h-1zM5 8h6v1h-6zM14 8h1v1h-1zM0 9h1v1h-1zM14 9h1v1h-1zM0 10h15v1h-15z"/><path fill="#ffff80" d="M1 3h13v1h-13zM1 4h1v1h-1zM8 4h3v1h-3zM13 4h1v1h-1zM1 5h10v1h-10zM13 5h1v1h-1zM1 6h4v1h-4zM11 6h3v1h-3zM1 7h13v1h-13zM1 8h4v1h-4zM11 8h3v1h-3zM1 9h13v1h-13z"/><path fill="#808080" d="M15 3h1v1h-1zM15 4h1v1h-1zM15 5h1v1h-1zM15 6h1v1h-1zM15 7h1v1h-1zM15 8h1v1h-1zM15 9h1v1h-1zM15 10h1v1h-1zM1 11h15v1h-15z"/></svg>
<svg style="left:0px;top:0px" width="20" height="21" viewBox="0 0 20 21"><path d="M2.3 8.6L10 4L18.200 11.200L9.200 15z" fill="#800000"/><path d="M2.3 8.6L9.2 15V19.200L2.3 12.6z" fill="#6a0000" stroke="#000" stroke-width=".9"/><path d="M3 9.8L9 15.400" stroke="#c9a0a0" stroke-width=".9"/><path d="M9.2 15L18.200 11.200V13.800L9.200 19z" fill="#fff"/><path d="M9.2 19.200L18.200 14" stroke="#000" stroke-width=".9" stroke-dasharray="2.2 1"/><path d="M2.3 8.6L10 4L18.200 11.200" fill="none" stroke="#300000" stroke-width=".5"/></svg>
<svg style="left:6px;top:23px" width="18" height="18" viewBox="0 0 18 18"><path d="M2 11.500L15.500 5V15.500H3z" fill="#800000"/><path d="M2 11.500l1 4h12.500" fill="none" stroke="#000" stroke-width=".9"/><path d="M15.500 5V15.500" stroke="#f00" stroke-width=".8"/><path d="M1.200 3.500L3.500 1L6.500 4.500V14L1.200 10.500z" fill="#fff" stroke="#000" stroke-width=".9"/><path d="M1.200 3.500V10.500" stroke="#a00000" stroke-width="1"/><path d="M7.500 4.500L13.500 3.200V11.500L7.500 13.800z" fill="#fff" stroke="#000" stroke-width=".9"/><path d="M12.500 4v7.500l-4.500 1.800" fill="none" stroke="#b0b0b0" stroke-width=".8"/></svg>
<div style="left:0px;top:74px;width:1366px;height:1px;background:#fff;"></div>
<div style="left:0px;top:75px;width:1365px;height:1px;background:#a0a0a0;"></div>
<div style="left:1px;top:76px;width:1363px;height:1px;background:#696969;"></div>
<div style="left:0px;top:75px;width:1px;height:639px;background:#a0a0a0;"></div>
<div style="left:1px;top:76px;width:1px;height:637px;background:#696969;"></div>
<div style="left:2px;top:77px;width:1px;height:636px;background:#a0a0a0;"></div>
<div style="left:2px;top:77px;width:1362px;height:1px;background:#a0a0a0;"></div>
<div style="left:3px;top:78px;width:1360px;height:1px;background:#fff;"></div>
<div style="left:3px;top:78px;width:1px;height:24px;background:#fff;"></div>
<div style="left:1364px;top:76px;width:1px;height:638px;background:#e3e3e3;"></div>
<div style="left:1365px;top:75px;width:1px;height:640px;background:#fff;"></div>
<div style="left:1361px;top:102px;width:1px;height:489px;background:#fff;"></div>
<div style="left:5px;top:77px;width:77px;height:21px;background:#fff;box-shadow:inset 1px 2px 0 #a0a0a0, inset 2px 3px 0 #696969, inset -1px -1px 0 #fff;"></div>
<div class="t g l" style="left:8px;top:81px;width:56px;height:15px;line-height:15px;"><span>2020.10</span></div>
<div style="left:64px;top:80px;width:17px;height:17px;background:#f0f0f0;box-shadow:inset 1px 1px 0 #fff, inset -1px -1px 0 #696969, inset -2px -2px 0 #a0a0a0;"></div>
<svg style="left:69px;top:86px" width="7" height="4" viewBox="0 0 7 4" shape-rendering="crispEdges"><path d="M0 0h7v1h-1v1h-1v1h-1v1h-1v-1h-1v-1h-1v-1h-1z" fill="#000"/></svg>
<div style="left:85px;top:84px;width:124px;height:17px;box-shadow:inset 1px 1px 0 #a0a0a0, inset -1px -1px 0 #a0a0a0;"></div>
<div style="left:86px;top:101px;width:124px;height:1px;background:#fff;"></div>
<div style="left:209px;top:84px;width:1px;height:18px;background:#fff;"></div>
<div style="left:86px;top:85px;width:122px;height:1px;background:#fff;"></div>
<div style="left:86px;top:85px;width:1px;height:15px;background:#fff;"></div>
<div style="left:86px;top:86px;width:122px;height:14px;overflow:hidden">
<div style="left:3px;top:-2px;width:12px;height:12px;border-radius:50%;background:#fff;border:1.5px solid;border-color:#6e6e6e #fff #fff #6e6e6e;"></div>
<div style="left:7px;top:2px;width:4px;height:4px;border-radius:40%;background:#000;"></div>
<div style="left:69.500px;top:-2px;width:12px;height:12px;border-radius:50%;background:#fff;border:1.5px solid;border-color:#6e6e6e #fff #fff #6e6e6e;"></div>
<div class="t g l" style="left:20px;top:-3px;width:60px;height:15px;line-height:15px;"><span>Sprzedaż</span></div>
<div class="t g l" style="left:86.5px;top:-3px;width:40px;height:15px;line-height:15px;"><span>Zakup</span></div>
</div>
<div style="left:211px;top:80px;width:27px;height:20px;background:#f0f0f0;box-shadow:inset -1px -1px 0 #696969, inset 1px 1px 0 #fff, inset -2px -2px 0 #a0a0a0;"></div>
<div class="t g c" style="left:212px;top:80px;width:26px;height:19px;line-height:19px;"><span style="transform:scaleX(0.78)"><u>F</u>iltr</span></div>
<div style="left:240px;top:80px;width:30px;height:20px;background:#f0f0f0;box-shadow:inset -1px -1px 0 #696969, inset 1px 1px 0 #fff, inset -2px -2px 0 #a0a0a0;"></div>
<div class="t g c" style="left:241px;top:80px;width:29px;height:19px;line-height:19px;"><span><u>M</u>oje</span></div>
<div style="left:271px;top:80px;width:38px;height:19px;background:#fff;box-shadow:inset 1px 1px 0 #a0a0a0, inset -1px -1px 0 #fff, inset 2px 2px 0 #696969, inset -2px -2px 0 #e3e3e3;"></div>
<div style="left:292px;top:82px;width:17px;height:17px;background:#f0f0f0;box-shadow:inset 1px 1px 0 #fff, inset -1px -1px 0 #696969, inset -2px -2px 0 #a0a0a0;"></div>
<svg style="left:297px;top:88px" width="7" height="4" viewBox="0 0 7 4" shape-rendering="crispEdges"><path d="M0 0h7v1h-1v1h-1v1h-1v1h-1v-1h-1v-1h-1v-1h-1z" fill="#000"/></svg>
<div style="left:311px;top:80px;width:42px;height:20px;background:#f0f0f0;box-shadow:inset -1px -1px 0 #696969, inset 1px 1px 0 #fff, inset -2px -2px 0 #a0a0a0;"></div>
<div class="t g c" style="left:312px;top:80px;width:41px;height:19px;line-height:19px;"><span>Dodaj</span></div>
<div style="left:353px;top:80px;width:36px;height:20px;background:#f0f0f0;box-shadow:inset -1px -1px 0 #696969, inset 1px 1px 0 #fff, inset -2px -2px 0 #a0a0a0;"></div>
<div class="t g c" style="left:354px;top:80px;width:35px;height:19px;line-height:19px;"><span>zam.</span></div>
<div style="left:390px;top:80px;width:42px;height:20px;background:#f0f0f0;box-shadow:inset -1px -1px 0 #696969, inset 1px 1px 0 #fff, inset -2px -2px 0 #a0a0a0;"></div>
<div class="t g c" style="left:391px;top:80px;width:41px;height:19px;line-height:19px;"><span>Usuń</span></div>
<div style="left:433px;top:80px;width:30px;height:20px;background:#f0f0f0;box-shadow:inset -1px -1px 0 #696969, inset 1px 1px 0 #fff, inset -2px -2px 0 #a0a0a0;"></div>
<div class="t g c" style="left:434px;top:80px;width:29px;height:19px;line-height:19px;"><span>F<u>K</u></span></div>
<div style="left:464px;top:80px;width:18px;height:19px;background:#fff;box-shadow:inset 1px 1px 0 #a0a0a0, inset -1px -1px 0 #fff, inset 2px 2px 0 #696969, inset -2px -2px 0 #e3e3e3;"></div>
<div style="left:482px;top:80px;width:21px;height:20px;background:#f0f0f0;box-shadow:inset -1px -1px 0 #696969, inset 1px 1px 0 #fff, inset -2px -2px 0 #a0a0a0;"></div>
<div style="left:483px;top:81px;width:18px;height:17px;background:#c0c0c0;"></div>
<svg style="left:484px;top:82px" width="17" height="16" viewBox="0 0 17 16" shape-rendering="crispEdges"><path d="M3.500 8.500v-8h6l3 3v5z" fill="#fff" stroke="#000"/><path d="M9.500 0.500v3h3" fill="none" stroke="#000"/><rect x="0.500" y="8.500" width="16" height="4" fill="#fff" stroke="#000"/><rect x="0.500" y="12.500" width="16" height="3" fill="#fff" stroke="#000"/><rect x="13" y="10" width="2" height="1" fill="#f00"/><path d="M2 10.500h10" stroke="#808080" stroke-dasharray="1 1"/></svg>
<div style="left:503px;top:80px;width:21px;height:20px;background:#f0f0f0;box-shadow:inset -1px -1px 0 #696969, inset 1px 1px 0 #fff, inset -2px -2px 0 #a0a0a0;"></div>
<div style="left:504px;top:81px;width:18px;height:17px;background:#c0c0c0;"></div>
<svg style="left:505px;top:82px" width="17" height="16" viewBox="0 0 17 16" shape-rendering="crispEdges"><path d="M3.500 8.500v-8h6l3 3v5z" fill="#fff" stroke="#000"/><path d="M9.500 0.500v3h3" fill="none" stroke="#000"/><rect x="0.500" y="8.500" width="16" height="4" fill="#fff" stroke="#000"/><rect x="0.500" y="12.500" width="16" height="3" fill="#fff" stroke="#000"/><rect x="13" y="10" width="2" height="1" fill="#f00"/><path d="M2 10.500h10" stroke="#808080" stroke-dasharray="1 1"/></svg>
<div style="left:524px;top:80px;width:21px;height:20px;background:#f0f0f0;box-shadow:inset -1px -1px 0 #696969, inset 1px 1px 0 #fff, inset -2px -2px 0 #a0a0a0;"></div>
<div style="left:525px;top:81px;width:18px;height:17px;background:#c0c0c0;"></div>
<svg style="left:526px;top:82px" width="17" height="16" viewBox="0 0 17 16" shape-rendering="crispEdges"><path d="M3.500 8.500v-8h6l3 3v5z" fill="#fff" stroke="#000"/><path d="M9.500 0.500v3h3" fill="none" stroke="#000"/><rect x="0.500" y="8.500" width="16" height="4" fill="#fff" stroke="#000"/><rect x="0.500" y="12.500" width="16" height="3" fill="#fff" stroke="#000"/><rect x="13" y="10" width="2" height="1" fill="#f00"/><path d="M2 10.500h10" stroke="#808080" stroke-dasharray="1 1"/></svg>
<div style="left:546px;top:80px;width:51px;height:20px;background:#f0f0f0;box-shadow:inset -1px -1px 0 #696969, inset 1px 1px 0 #fff, inset -2px -2px 0 #a0a0a0;"></div>
<div class="t g c" style="left:547px;top:80px;width:50px;height:19px;line-height:19px;"><span>JPK</span></div>
<div style="left:597px;top:80px;width:80px;height:20px;background:#f0f0f0;box-shadow:inset -1px -1px 0 #696969, inset 1px 1px 0 #fff, inset -2px -2px 0 #a0a0a0;"></div>
<div class="t g c" style="left:598px;top:80px;width:79px;height:19px;line-height:19px;"><span><u>S</u>pecyfikacja</span></div>
<div style="left:3px;top:102px;width:1358px;height:489px;background:#fff;"></div>
<div style="left:3px;top:122px;width:23px;height:469px;background:#a5a5a5;"></div>
<div style="left:327px;top:122px;width:17px;height:469px;background:#c3c3c3;"></div>
<div style="left:345px;top:122px;width:23px;height:469px;background:#a5a5a5;"></div>
<div style="left:369px;top:122px;width:89px;height:469px;background:#c3c3c3;"></div>
<div style="left:459px;top:122px;width:23px;height:469px;background:#c3c3c3;"></div>
<div style="left:3px;top:142px;width:1358px;height:19px;background:#3399ff;"></div>
<div style="left:3px;top:102px;width:1358px;height:19px;background:#f0f0f0;"></div>
<div style="left:3px;top:102px;width:23px;height:19px;background:#f0f0f0;box-shadow:inset -2px -2px 0 #a0a0a0, inset 1px 1px 0 #fff;"></div>
<div class="t g c" style="left:5px;top:102px;width:19px;height:18px;line-height:18px;overflow:hidden;"><span>Lp</span></div>
<div style="left:27px;top:102px;width:71px;height:19px;background:#f0f0f0;box-shadow:inset -2px -2px 0 #a0a0a0, inset 1px 1px 0 #fff;"></div>
<div class="t g c" style="left:29px;top:102px;width:67px;height:18px;line-height:18px;overflow:hidden;"><span>Data</span></div>
<div style="left:99px;top:102px;width:35px;height:19px;background:#f0f0f0;box-shadow:inset -2px -2px 0 #a0a0a0, inset 1px 1px 0 #fff;"></div>
<div class="t g c" style="left:101px;top:102px;width:31px;height:18px;line-height:18px;overflow:hidden;"><span>czas</span></div>
<div style="left:135px;top:102px;width:35px;height:19px;background:#f0f0f0;box-shadow:inset -2px -2px 0 #a0a0a0, inset 1px 1px 0 #fff;"></div>
<div class="t g c" style="left:137px;top:102px;width:31px;height:18px;line-height:18px;overflow:hidden;"><span>RD</span></div>
<div style="left:171px;top:102px;width:95px;height:19px;background:#f0f0f0;box-shadow:inset -2px -2px 0 #a0a0a0, inset 1px 1px 0 #fff;"></div>
<div class="t g c" style="left:173px;top:102px;width:91px;height:18px;line-height:18px;overflow:hidden;"><span>NDK</span></div>
<div style="left:267px;top:102px;width:59px;height:19px;background:#f0f0f0;box-shadow:inset -2px -2px 0 #a0a0a0, inset 1px 1px 0 #fff;"></div>
<div class="t g c" style="left:269px;top:102px;width:55px;height:18px;line-height:18px;overflow:hidden;"><span>przyr.</span></div>
<div style="left:327px;top:102px;width:17px;height:19px;background:#f0f0f0;box-shadow:inset -2px -2px 0 #a0a0a0, inset 1px 1px 0 #fff;"></div>
<div class="t g c" style="left:329px;top:102px;width:13px;height:18px;line-height:18px;overflow:hidden;"><span>gr</span></div>
<div style="left:345px;top:102px;width:23px;height:19px;background:#f0f0f0;box-shadow:inset -2px -2px 0 #a0a0a0, inset 1px 1px 0 #fff;"></div>
<div class="t g c" style="left:347px;top:102px;width:19px;height:18px;line-height:18px;overflow:hidden;"><span>F2e</span></div>
<div style="left:369px;top:102px;width:89px;height:19px;background:#f0f0f0;box-shadow:inset -2px -2px 0 #a0a0a0, inset 1px 1px 0 #fff;"></div>
<div class="t g c" style="left:371px;top:102px;width:85px;height:18px;line-height:18px;overflow:hidden;"><span>Kontrahent</span></div>
<div style="left:459px;top:102px;width:23px;height:19px;background:#f0f0f0;box-shadow:inset -2px -2px 0 #a0a0a0, inset 1px 1px 0 #fff;"></div>
<div class="t g c" style="left:461px;top:102px;width:19px;height:18px;line-height:18px;overflow:hidden;"><span>od.</span></div>
<div style="left:483px;top:102px;width:215px;height:19px;background:#f0f0f0;box-shadow:inset -2px -2px 0 #a0a0a0, inset 1px 1px 0 #fff;"></div>
<div class="t g c" style="left:485px;top:102px;width:211px;height:18px;line-height:18px;overflow:hidden;"><span>przedmiot</span></div>
<div style="left:699px;top:102px;width:77px;height:19px;background:#f0f0f0;box-shadow:inset -2px -2px 0 #a0a0a0, inset 1px 1px 0 #fff;"></div>
<div class="t g c" style="left:701px;top:102px;width:73px;height:18px;line-height:18px;overflow:hidden;"><span>Netto</span></div>
<div style="left:777px;top:102px;width:71px;height:19px;background:#f0f0f0;box-shadow:inset -2px -2px 0 #a0a0a0, inset 1px 1px 0 #fff;"></div>
<div class="t g c" style="left:779px;top:102px;width:67px;height:18px;line-height:18px;overflow:hidden;"><span>VAT</span></div>
<div style="left:849px;top:102px;width:77px;height:19px;background:#f0f0f0;box-shadow:inset -2px -2px 0 #a0a0a0, inset 1px 1px 0 #fff;"></div>
<div class="t g c" style="left:851px;top:102px;width:73px;height:18px;line-height:18px;overflow:hidden;"><span>Brutto</span></div>
<div style="left:927px;top:102px;width:29px;height:19px;background:#f0f0f0;box-shadow:inset -2px -2px 0 #a0a0a0, inset 1px 1px 0 #fff;"></div>
<div class="t g c" style="left:929px;top:102px;width:25px;height:18px;line-height:18px;overflow:hidden;"><span>%VAT</span></div>
<div style="left:957px;top:102px;width:29px;height:19px;background:#f0f0f0;box-shadow:inset -2px -2px 0 #a0a0a0, inset 1px 1px 0 #fff;"></div>
<div class="t g c" style="left:959px;top:102px;width:25px;height:18px;line-height:18px;overflow:hidden;"><span>%PD</span></div>
<div style="left:987px;top:102px;width:47px;height:19px;background:#f0f0f0;box-shadow:inset -2px -2px 0 #a0a0a0, inset 1px 1px 0 #fff;"></div>
<div class="t g c" style="left:989px;top:102px;width:43px;height:18px;line-height:18px;overflow:hidden;"><span>udział%</span></div>
<div style="left:1035px;top:102px;width:83px;height:19px;background:#f0f0f0;box-shadow:inset -2px -2px 0 #a0a0a0, inset 1px 1px 0 #fff;"></div>
<div class="t g c" style="left:1037px;top:102px;width:79px;height:18px;line-height:18px;overflow:hidden;"><span>SAD</span></div>
<div style="left:1119px;top:102px;width:71px;height:19px;background:#f0f0f0;box-shadow:inset -2px -2px 0 #a0a0a0, inset 1px 1px 0 #fff;"></div>
<div class="t g c" style="left:1121px;top:102px;width:67px;height:18px;line-height:18px;overflow:hidden;"><span>wystaw.</span></div>
<div style="left:1191px;top:102px;width:71px;height:19px;background:#f0f0f0;box-shadow:inset -2px -2px 0 #a0a0a0, inset 1px 1px 0 #fff;"></div>
<div class="t g c" style="left:1193px;top:102px;width:67px;height:18px;line-height:18px;overflow:hidden;"><span>sprzedaż</span></div>
<div style="left:1263px;top:102px;width:17px;height:19px;background:#f0f0f0;box-shadow:inset -2px -2px 0 #a0a0a0, inset 1px 1px 0 #fff;"></div>
<div class="t g c" style="left:1265px;top:102px;width:13px;height:18px;line-height:18px;overflow:hidden;"><span>so</span></div>
<div style="left:1281px;top:102px;width:77px;height:19px;background:#f0f0f0;box-shadow:inset -2px -2px 0 #a0a0a0, inset 1px 1px 0 #fff;"></div>
<div class="t g c" style="left:1283px;top:102px;width:73px;height:18px;line-height:18px;overflow:hidden;"><span>otrzymano</span></div>
<div style="left:3px;top:121px;width:1358px;height:1px;background:#696969;"></div>
<div style="left:3px;top:141px;width:1358px;height:1px;background:#696969;"></div>
<div style="left:3px;top:161px;width:1358px;height:1px;background:#696969;"></div>
<div style="left:3px;top:181px;width:1358px;height:1px;background:#696969;"></div>
<div style="left:3px;top:201px;width:1358px;height:1px;background:#696969;"></div>
<div style="left:26px;top:102px;width:1px;height:489px;background:#696969;"></div>
<div style="left:98px;top:102px;width:1px;height:489px;background:#696969;"></div>
<div style="left:134px;top:102px;width:1px;height:489px;background:#696969;"></div>
<div style="left:170px;top:102px;width:1px;height:489px;background:#696969;"></div>
<div style="left:266px;top:102px;width:1px;height:489px;background:#696969;"></div>
<div style="left:326px;top:102px;width:1px;height:489px;background:#696969;"></div>
<div style="left:344px;top:102px;width:1px;height:489px;background:#696969;"></div>
<div style="left:368px;top:102px;width:1px;height:489px;background:#696969;"></div>
<div style="left:458px;top:102px;width:1px;height:489px;background:#696969;"></div>
<div style="left:482px;top:102px;width:1px;height:489px;background:#696969;"></div>
<div style="left:698px;top:102px;width:1px;height:489px;background:#696969;"></div>
<div style="left:776px;top:102px;width:1px;height:489px;background:#696969;"></div>
<div style="left:848px;top:102px;width:1px;height:489px;background:#696969;"></div>
<div style="left:926px;top:102px;width:1px;height:489px;background:#696969;"></div>
<div style="left:956px;top:102px;width:1px;height:489px;background:#696969;"></div>
<div style="left:986px;top:102px;width:1px;height:489px;background:#696969;"></div>
<div style="left:1034px;top:102px;width:1px;height:489px;background:#696969;"></div>
<div style="left:1118px;top:102px;width:1px;height:489px;background:#696969;"></div>
<div style="left:1190px;top:102px;width:1px;height:489px;background:#696969;"></div>
<div style="left:1262px;top:102px;width:1px;height:489px;background:#696969;"></div>
<div style="left:1280px;top:102px;width:1px;height:489px;background:#696969;"></div>
<div style="left:1358px;top:102px;width:1px;height:489px;background:#696969;"></div>
<div class="t g l" style="left:30px;top:123px;width:68px;height:19px;line-height:19px;"><span>2020.10</span></div>
<div class="t g r" style="left:699px;top:123px;width:75px;height:19px;line-height:19px;"><span>54 652,21</span></div>
<div class="t g r" style="left:777px;top:123px;width:69px;height:19px;line-height:19px;"><span>5 347,79</span></div>
<div class="t g r" style="left:849px;top:123px;width:75px;height:19px;line-height:19px;"><span>60 000,00</span></div>
<div class="t g r" style="left:3px;top:143px;width:21px;height:19px;line-height:19px;color:#fff;"><span>1</span></div>
<div class="t g l" style="left:30px;top:143px;width:68px;height:19px;line-height:19px;color:#fff;"><span>2020.10.08</span></div>
<div class="t g c" style="left:100px;top:143px;width:35px;height:19px;line-height:19px;color:#fff;"><span>10:31</span></div>
<div class="t g c" style="left:136px;top:143px;width:35px;height:19px;line-height:19px;color:#fff;"><span>FA</span></div>
<div class="t g l" style="left:174px;top:143px;width:92px;height:19px;line-height:19px;color:#fff;"><span>10/2020/01</span></div>
<div class="t g l" style="left:330px;top:143px;width:14px;height:19px;line-height:19px;color:#fff;"><span>K</span></div>
<div class="t g c" style="left:1120px;top:143px;width:71px;height:19px;line-height:19px;color:#fff;"><span>2020.10.08</span></div>
<div class="t g c" style="left:1192px;top:143px;width:71px;height:19px;line-height:19px;color:#fff;"><span>2020.10.08</span></div>
<div class="t g r" style="left:3px;top:163px;width:21px;height:19px;line-height:19px;"><span>2</span></div>
<div class="t g l" style="left:30px;top:163px;width:68px;height:19px;line-height:19px;"><span>2020.10.31</span></div>
<div class="t g c" style="left:100px;top:163px;width:35px;height:19px;line-height:19px;"><span>17:37</span></div>
<div class="t g c" style="left:136px;top:163px;width:35px;height:19px;line-height:19px;"><span>RF</span></div>
<div class="t g l" style="left:174px;top:163px;width:92px;height:19px;line-height:19px;"><span>RF 10/2020</span></div>
<div class="t g l" style="left:330px;top:163px;width:14px;height:19px;line-height:19px;"><span>K</span></div>
<div class="t g c" style="left:1120px;top:163px;width:71px;height:19px;line-height:19px;"><span>2020.10.31</span></div>
<div class="t g c" style="left:1192px;top:163px;width:71px;height:19px;line-height:19px;"><span>2020.10.31</span></div>
<div class="t g l" style="left:30px;top:183px;width:68px;height:19px;line-height:19px;"><span>2020.10___</span></div>
<div style="left:3px;top:591px;width:1361px;height:17px;background:#f0f0f0;"></div>
<div style="left:20px;top:592px;width:17px;height:15px;background:#cdcdcd;"></div>
<svg style="left:8px;top:596px" width="6" height="8" viewBox="0 0 6 8"><path d="M5 0.5L1.5 4L5 7.5" fill="none" stroke="#505050" stroke-width="2"/></svg>
<svg style="left:1349px;top:596px" width="6" height="8" viewBox="0 0 6 8"><path d="M1 0.5L4.5 4L1 7.5" fill="none" stroke="#505050" stroke-width="2"/></svg>
<div class="t b l" style="left:6px;top:614px;width:300px;height:18px;line-height:18px;"><span>ANDRZEJ GÓRECKI</span></div>
<div class="t b l" style="left:6px;top:662px;width:300px;height:18px;line-height:18px;"><span>POWSTAŃCÓW ŚLĄSKICH 88/43</span></div>
<div class="t b l" style="left:6px;top:679px;width:300px;height:18px;line-height:18px;"><span>53-333 Wrocław</span></div>
<div class="t g r" style="left:300px;top:694px;width:45px;height:18px;line-height:18px;"><span>120</span></div>
<div style="left:351px;top:609px;width:822px;height:104px;background:#fff;"></div>
<div style="left:351px;top:629px;width:17px;height:84px;background:#c3c3c3;"></div>
<div style="left:633px;top:629px;width:95px;height:84px;background:#c3c3c3;"></div>
<div style="left:729px;top:629px;width:17px;height:84px;background:#c3c3c3;"></div>
<div style="left:747px;top:629px;width:65px;height:84px;background:#c3c3c3;"></div>
<div style="left:351px;top:629px;width:822px;height:19px;background:#3399ff;"></div>
<div style="left:351px;top:609px;width:17px;height:19px;background:#f0f0f0;box-shadow:inset -2px -2px 0 #a0a0a0, inset 1px 1px 0 #fff;"></div>
<div class="t g c" style="left:353px;top:609px;width:13px;height:18px;line-height:18px;overflow:hidden;"><span>R</span></div>
<div style="left:368px;top:609px;width:1px;height:104px;background:#696969;"></div>
<div style="left:369px;top:609px;width:17px;height:19px;background:#f0f0f0;box-shadow:inset -2px -2px 0 #a0a0a0, inset 1px 1px 0 #fff;"></div>
<div class="t g c" style="left:371px;top:609px;width:13px;height:18px;line-height:18px;overflow:hidden;"><span>SV</span></div>
<div style="left:386px;top:609px;width:1px;height:104px;background:#696969;"></div>
<div style="left:387px;top:609px;width:77px;height:19px;background:#f0f0f0;box-shadow:inset -2px -2px 0 #a0a0a0, inset 1px 1px 0 #fff;"></div>
<div class="t g c" style="left:389px;top:609px;width:73px;height:18px;line-height:18px;overflow:hidden;"><span>Netto</span></div>
<div style="left:464px;top:609px;width:1px;height:104px;background:#696969;"></div>
<div style="left:465px;top:609px;width:71px;height:19px;background:#f0f0f0;box-shadow:inset -2px -2px 0 #a0a0a0, inset 1px 1px 0 #fff;"></div>
<div class="t g c" style="left:467px;top:609px;width:67px;height:18px;line-height:18px;overflow:hidden;"><span>Vat</span></div>
<div style="left:536px;top:609px;width:1px;height:104px;background:#696969;"></div>
<div style="left:537px;top:609px;width:77px;height:19px;background:#f0f0f0;box-shadow:inset -2px -2px 0 #a0a0a0, inset 1px 1px 0 #fff;"></div>
<div class="t g c" style="left:539px;top:609px;width:73px;height:18px;line-height:18px;overflow:hidden;"><span>Brutto</span></div>
<div style="left:614px;top:609px;width:1px;height:104px;background:#696969;"></div>
<div style="left:615px;top:609px;width:17px;height:19px;background:#f0f0f0;box-shadow:inset -2px -2px 0 #a0a0a0, inset 1px 1px 0 #fff;"></div>
<div class="t g c" style="left:617px;top:609px;width:13px;height:18px;line-height:18px;overflow:hidden;"><span>r.</span></div>
<div style="left:632px;top:609px;width:1px;height:104px;background:#696969;"></div>
<div style="left:633px;top:609px;width:95px;height:19px;background:#f0f0f0;box-shadow:inset -2px -2px 0 #a0a0a0, inset 1px 1px 0 #fff;"></div>
<div class="t g c" style="left:635px;top:609px;width:91px;height:18px;line-height:18px;overflow:hidden;"><span>Kat.RV</span></div>
<div style="left:728px;top:609px;width:1px;height:104px;background:#696969;"></div>
<div style="left:729px;top:609px;width:17px;height:19px;background:#f0f0f0;box-shadow:inset -2px -2px 0 #a0a0a0, inset 1px 1px 0 #fff;"></div>
<div class="t g c" style="left:731px;top:609px;width:13px;height:18px;line-height:18px;overflow:hidden;"><span>K</span></div>
<div style="left:746px;top:609px;width:1px;height:104px;background:#696969;"></div>
<div style="left:747px;top:609px;width:65px;height:19px;background:#f0f0f0;box-shadow:inset -2px -2px 0 #a0a0a0, inset 1px 1px 0 #fff;"></div>
<div class="t g c" style="left:749px;top:609px;width:61px;height:18px;line-height:18px;overflow:hidden;"><span>Kat.KD</span></div>
<div style="left:812px;top:609px;width:1px;height:104px;background:#696969;"></div>
<div style="left:813px;top:609px;width:71px;height:19px;background:#f0f0f0;box-shadow:inset -2px -2px 0 #a0a0a0, inset 1px 1px 0 #fff;"></div>
<div class="t g c" style="left:815px;top:609px;width:67px;height:18px;line-height:18px;overflow:hidden;"><span>akcyza</span></div>
<div style="left:884px;top:609px;width:1px;height:104px;background:#696969;"></div>
<div style="left:885px;top:609px;width:71px;height:19px;background:#f0f0f0;box-shadow:inset -2px -2px 0 #a0a0a0, inset 1px 1px 0 #fff;"></div>
<div class="t g c" style="left:887px;top:609px;width:67px;height:18px;line-height:18px;overflow:hidden;"><span>opł.pal.</span></div>
<div style="left:956px;top:609px;width:1px;height:104px;background:#696969;"></div>
<div style="left:957px;top:609px;width:71px;height:19px;background:#f0f0f0;box-shadow:inset -2px -2px 0 #a0a0a0, inset 1px 1px 0 #fff;"></div>
<div class="t g c" style="left:959px;top:609px;width:67px;height:18px;line-height:18px;overflow:hidden;"><span>ubezp.</span></div>
<div style="left:1028px;top:609px;width:1px;height:104px;background:#696969;"></div>
<div style="left:1029px;top:609px;width:71px;height:19px;background:#f0f0f0;box-shadow:inset -2px -2px 0 #a0a0a0, inset 1px 1px 0 #fff;"></div>
<div class="t g c" style="left:1031px;top:609px;width:67px;height:18px;line-height:18px;overflow:hidden;"><span>transp.</span></div>
<div style="left:1100px;top:609px;width:1px;height:104px;background:#696969;"></div>
<div style="left:1101px;top:609px;width:71px;height:19px;background:#f0f0f0;box-shadow:inset -2px -2px 0 #a0a0a0, inset 1px 1px 0 #fff;"></div>
<div class="t g c" style="left:1103px;top:609px;width:67px;height:18px;line-height:18px;overflow:hidden;"><span>cło</span></div>
<div style="left:1172px;top:609px;width:1px;height:104px;background:#696969;"></div>
<div style="left:351px;top:628px;width:822px;height:1px;background:#696969;"></div>
<div style="left:351px;top:648px;width:822px;height:1px;background:#696969;"></div>
<div class="t g c" style="left:352px;top:630px;width:17px;height:19px;line-height:19px;color:#fff;"><span>P</span></div>
<div class="t g r" style="left:369px;top:630px;width:15px;height:19px;line-height:19px;color:#fff;"><span>8</span></div>
<div class="t g r" style="left:387px;top:630px;width:75px;height:19px;line-height:19px;color:#fff;"><span>5 555,56</span></div>
<div class="t g r" style="left:465px;top:630px;width:69px;height:19px;line-height:19px;color:#fff;"><span>444,44</span></div>
<div class="t g r" style="left:537px;top:630px;width:75px;height:19px;line-height:19px;color:#fff;"><span>6 000,00</span></div>
<div class="t g l" style="left:618px;top:630px;width:14px;height:19px;line-height:19px;color:#fff;"><span>X</span></div>
<div class="t g r" style="left:813px;top:630px;width:69px;height:19px;line-height:19px;color:#fff;"><span>0,00</span></div>
<div class="t g r" style="left:885px;top:630px;width:69px;height:19px;line-height:19px;color:#fff;"><span>0,00</span></div>
<div class="t g r" style="left:957px;top:630px;width:69px;height:19px;line-height:19px;color:#fff;"><span>0,00</span></div>
<div class="t g r" style="left:1029px;top:630px;width:69px;height:19px;line-height:19px;color:#fff;"><span>0,00</span></div>
<div class="t g r" style="left:1101px;top:630px;width:69px;height:19px;line-height:19px;color:#fff;"><span>0,00</span></div>
<div style="left:2px;top:713px;width:1364px;height:1px;background:#fff;"></div>
<div style="left:0px;top:714px;width:1366px;height:1px;background:#e8e8e8;"></div>
<div style="left:0px;top:715px;width:1366px;height:1px;background:#fff;"></div>
<div style="left:0px;top:716px;width:1366px;height:22px;background:#f0f0f0;"></div>
<div class="t st l" style="left:3px;top:718px;width:700px;height:21px;line-height:21px;letter-spacing:-.02px;"><span>Czy zakrąglić netto waluty krajowej w oper.walutowych do pełnej wartości ?</span></div>
<div style="left:1091px;top:718px;width:22px;height:19px;box-shadow:inset 1px 1px 0 #a0a0a0, inset -1px -1px 0 #fff;"></div>
<div class="t st sc l" style="left:1094px;top:718px;width:22px;height:19px;line-height:19px;color:#808080;"><span>INS</span></div>
<div style="left:1116px;top:718px;width:34px;height:19px;box-shadow:inset 1px 1px 0 #a0a0a0, inset -1px -1px 0 #fff;"></div>
<div class="t st sc l" style="left:1119px;top:718px;width:34px;height:19px;line-height:19px;color:#808080;"><span>CAPS</span></div>
<div style="left:1153px;top:718px;width:31px;height:19px;box-shadow:inset 1px 1px 0 #a0a0a0, inset -1px -1px 0 #fff;"></div>
<div class="t st sc l" style="left:1156px;top:718px;width:31px;height:19px;line-height:19px;color:#808080;"><span>NUM</span></div>
<div style="left:1187px;top:718px;width:53px;height:19px;box-shadow:inset 1px 1px 0 #a0a0a0, inset -1px -1px 0 #fff;"></div>
<div class="t st sc l" style="left:1190px;top:718px;width:53px;height:19px;line-height:19px;color:#808080;"><span>SCROLL</span></div>
<div style="left:1243px;top:718px;width:55px;height:19px;box-shadow:inset 1px 1px 0 #a0a0a0, inset -1px -1px 0 #fff;"></div>
<div class="t st sc l" style="left:1246px;top:718px;width:55px;height:19px;line-height:19px;color:#000;"><span>15:58:18</span></div>
<div style="left:1300px;top:718px;width:63px;height:19px;box-shadow:inset 1px 1px 0 #a0a0a0, inset -1px -1px 0 #fff;"></div>
<div class="t st sc l" style="left:1303px;top:718px;width:63px;height:19px;line-height:19px;color:#000;"><span>2020.11.17</span></div>
<div style="left:0px;top:738px;width:1366px;height:30px;background:linear-gradient(90deg,#55506b 0%,#5e5670 15%,#6a5d76 30%,#7d667d 45%,#8b6f86 55%,#86697f 70%,#7b6076 85%,#866a80 100%);"></div>
<div style="left:0;top:738px;width:1366px;height:1px;background:rgba(30,25,45,.45)"></div>
<svg style="left:13px;top:746px" width="14" height="14" viewBox="0 0 14 14"><path d="M0 2.2L5.8 1.3V6.6H0zM6.6 1.2L14 0V6.6H6.6zM0 7.4H5.8V12.7L0 11.8zM6.6 7.4H14V14L6.6 12.8z" fill="#fff"/></svg>
<div style="left:42px;top:739px;width:158px;height:28px;background:rgba(255,255,255,.20);box-shadow:inset 0 0 0 1px rgba(255,255,255,.22);"></div>
<div style="left:204px;top:739px;width:158px;height:28px;background:linear-gradient(180deg,rgba(255,255,255,.42),rgba(255,255,255,.34));box-shadow:inset 0 0 0 1px rgba(255,255,255,.65);"></div>
<div style="left:458px;top:739px;width:158px;height:28px;background:rgba(255,255,255,.16);box-shadow:inset 0 0 0 1px rgba(255,255,255,.25);"></div>
<svg style="left:51px;top:744px" width="15" height="17" viewBox="0 0 15 17"><path d="M1 2.5q0-1 1-1h3.5l1 1h5.5q1 0 1 1v11.5q0 1-1 1h-10q-1 0-1-1z" fill="#e8c84a"/><path d="M1 4h12v11q0 1-1 1h-10q-1 0-1-1z" fill="#f7df7e"/><path d="M6 1.5h2v14.5h-2z" fill="#fff3b0" opacity=".8"/><rect x="11.5" y="9" width="1.2" height="4" fill="#4aa3d8"/></svg>
<svg style="left:213px;top:745px" width="17" height="16" viewBox="0 0 17 16"><path d="M0.5 6l6-5.5l9.5 6l-6 5.5z" fill="#8b0f0f" stroke="#4a0000" stroke-width=".7"/><path d="M0.5 6v3l9.5 6.5v-3.5z" fill="#5e0808"/><path d="M10 12l6-5.5v3l-6 6z" fill="#f4f4f4" stroke="#777" stroke-width=".6"/></svg>
<div class="t tb l" style="left:71px;top:739px;width:200px;height:28px;line-height:28px"><span style="transform:scaleX(0.95)">Zrzuty ekranu</span></div>
<div class="t tb l" style="left:233px;top:739px;width:200px;height:28px;line-height:28px"><span style="transform:scaleX(0.95)">VATowiec - TOMEK ...</span></div>
<div class="t tb l" style="left:487px;top:739px;width:200px;height:28px;line-height:28px"><span style="transform:scaleX(0.95)">vatowiec.pl • Zobacz...</span></div>
<svg style="left:376px;top:742px" width="22" height="21" viewBox="0 0 22 21"><text x="11.500" y="17.500" font-family="Liberation Sans" font-weight="bold" font-size="21" text-anchor="middle" fill="#3fb2f2">e</text><ellipse cx="11" cy="10" rx="10" ry="4.200" transform="rotate(-35 11 10)" fill="none" stroke="#f2b92a" stroke-width="1.600" stroke-dasharray="38 9" stroke-dashoffset="-3"/></svg>
<svg style="left:424px;top:745px" width="17" height="16" viewBox="0 0 17 16"><defs><linearGradient id="eg424" x1="0" y1="0" x2="1" y2="1"><stop offset="0" stop-color="#2ea3e6"/><stop offset=".55" stop-color="#1b6fd0"/><stop offset="1" stop-color="#1657b0"/></linearGradient><linearGradient id="eh424" x1="0" y1="1" x2="1" y2="0"><stop offset="0" stop-color="#2bb9d6"/><stop offset="1" stop-color="#6ddc4a"/></linearGradient></defs><circle cx="8.5" cy="8" r="8" fill="url(#eg424)"/><path d="M1 5.5a8 8 0 0 1 15.4 1.5q.3 3-3 3.4h-4.4q-.4-2.4 1.2-3.2q-3.8-2.2-6 .8q-1.500 -1-3.200-2.500z" fill="url(#eh424)"/><path d="M6.500 8.500a3.300 3.300 0 0 0 5 4.300a5 5 0 0 1-6.500-1.300q-1-1.800.3-3.500z" fill="#0e4a9a" opacity=".7"/></svg>
<svg style="left:632px;top:745px" width="17" height="16" viewBox="0 0 17 16"><defs><linearGradient id="eg632" x1="0" y1="0" x2="1" y2="1"><stop offset="0" stop-color="#2ea3e6"/><stop offset=".55" stop-color="#1b6fd0"/><stop offset="1" stop-color="#1657b0"/></linearGradient><linearGradient id="eh632" x1="0" y1="1" x2="1" y2="0"><stop offset="0" stop-color="#2bb9d6"/><stop offset="1" stop-color="#6ddc4a"/></linearGradient></defs><circle cx="8.5" cy="8" r="8" fill="url(#eg632)"/><path d="M1 5.5a8 8 0 0 1 15.4 1.5q.3 3-3 3.4h-4.4q-.4-2.4 1.2-3.2q-3.8-2.2-6 .8q-1.500 -1-3.200-2.500z" fill="url(#eh632)"/><path d="M6.500 8.500a3.300 3.300 0 0 0 5 4.300a5 5 0 0 1-6.500-1.300q-1-1.800.3-3.500z" fill="#0e4a9a" opacity=".7"/></svg>
<svg style="left:468px;top:746px" width="15" height="15" viewBox="0 0 15 15"><circle cx="7.500" cy="7.500" r="7.200" fill="#fff"/><path d="M7.500 7.500L1.260 3.900A7.200 7.200 0 0 1 13.740 3.900z" fill="#e33b2e"/><path d="M7.500 7.500L13.740 3.900A7.200 7.200 0 0 1 7.500 14.700z" fill="#f7c51d"/><path d="M7.500 7.500L7.500 14.700A7.200 7.200 0 0 1 1.260 3.900z" fill="#2da94f"/><circle cx="7.500" cy="7.500" r="3.400" fill="#fff"/><circle cx="7.500" cy="7.500" r="2.600" fill="#4a8af4"/></svg>
<svg style="left:1226px;top:747px" width="19" height="11" viewBox="0 0 19 11" shape-rendering="crispEdges"><rect x="0.5" y="0.5" width="18" height="10" rx="1" fill="none" stroke="#fff"/><path d="M2 2h1v1h-1zM4 2h1v1h-1zM6 2h1v1h-1zM8 2h1v1h-1zM10 2h1v1h-1zM12 2h1v1h-1zM14 2h1v1h-1zM16 2h1v1h-1zM2 4h1v1h-1zM4 4h1v1h-1zM6 4h1v1h-1zM8 4h1v1h-1zM10 4h1v1h-1zM12 4h1v1h-1zM14 4h1v1h-1zM16 4h1v1h-1zM2 6h1v1h-1zM4 6h1v1h-1zM6 6h1v1h-1zM8 6h1v1h-1zM10 6h1v1h-1zM12 6h1v1h-1zM14 6h1v1h-1zM16 6h1v1h-1zM4 8h11v1h-11z" fill="#fff"/></svg>
<svg style="left:1264px;top:751px" width="9" height="5" viewBox="0 0 9 5"><path d="M0 5L4.500 0L9 5z" fill="#fff"/></svg>
<div class="t tb l" style="left:1305px;top:739px;width:60px;height:28px;line-height:28px"><span style="transform:scaleX(.95)">15:58</span></div>
<div style="left:366px;top:142px;width:633px;height:453px;background:#e5668d;box-shadow:inset 0 0 0 1px #cf5b80;"></div>
<div class="t dtitle c" style="left:366px;top:143px;width:633px;height:25px;line-height:25px;"><span>Kategorie RV</span></div>
<div style="left:371px;top:149px;width:16px;height:12px;background:#e8ecea;box-shadow:inset 0 0 0 1px #c9d2cf;"></div>
<div style="left:373px;top:151px;width:5px;height:8px;background:linear-gradient(180deg,#3f78b8,#3d9a6c);"></div>
<div style="left:379px;top:151px;width:4px;height:8px;background:#dfe6e2;"></div>
<div style="left:384px;top:151px;width:1px;height:4px;background:#5aa0a8;"></div>
<div style="left:907px;top:155px;width:8px;height:2px;background:#a8486a;"></div>
<svg style="left:933px;top:149px" width="10" height="9" viewBox="0 0 10 9" shape-rendering="crispEdges"><path d="M0 0h10v9h-10zM1 2v6h8v-6z" fill="#000" fill-rule="evenodd"/></svg>
<div style="left:951px;top:143px;width:45px;height:20px;background:#c75050;"></div>
<svg style="left:970px;top:149px" width="9" height="9" viewBox="0 0 9 9"><path d="M1 1l7 7M8 1l-7 7" stroke="#fff" stroke-width="1.8"/></svg>
<div style="left:369px;top:168px;width:627px;height:424px;background:#f0f0f0;box-shadow:inset 1px 1px 0 #b9b9b9, inset -1px -1px 0 #fff;"></div>
<div style="left:373px;top:170px;width:18px;height:18px;background:#fff;box-shadow:inset 1px 1px 0 #a0a0a0, inset -1px -1px 0 #fff, inset 2px 2px 0 #696969, inset -2px -2px 0 #e3e3e3;"></div>
<div style="left:409px;top:169px;width:80px;height:18px;background:#fff;box-shadow:inset 1px 0 0 #a0a0a0, inset 2px 0 0 #696969, inset -1px -1px 0 #fff;"></div>
<div class="t g l" style="left:412px;top:168px;width:58px;height:18px;line-height:18px;"><span>Sprzedaż</span></div>
<div style="left:471px;top:169px;width:17px;height:17px;background:#f0f0f0;box-shadow:inset 1px 1px 0 #fff, inset -1px -1px 0 #696969, inset -2px -2px 0 #a0a0a0;"></div>
<svg style="left:476px;top:175px" width="7" height="4" viewBox="0 0 7 4" shape-rendering="crispEdges"><path d="M0 0h7v1h-1v1h-1v1h-1v1h-1v-1h-1v-1h-1v-1h-1z" fill="#000"/></svg>
<div style="left:504px;top:169px;width:63px;height:20px;background:#f0f0f0;box-shadow:inset -1px -1px 0 #696969, inset 1px 1px 0 #fff, inset -2px -2px 0 #a0a0a0;"></div>
<div class="t g c" style="left:505px;top:169px;width:62px;height:19px;line-height:19px;"><span>Dodaj</span></div>
<div style="left:574px;top:169px;width:54px;height:20px;background:#f0f0f0;box-shadow:inset -1px -1px 0 #696969, inset 1px 1px 0 #fff, inset -2px -2px 0 #a0a0a0;"></div>
<div class="t g c" style="left:575px;top:169px;width:53px;height:19px;line-height:19px;"><span>Usuń</span></div>
<div style="left:663px;top:169px;width:62px;height:20px;background:#f0f0f0;box-shadow:inset -1px -1px 0 #696969, inset 1px 1px 0 #fff, inset -2px -2px 0 #a0a0a0;"></div>
<div class="t g c" style="left:664px;top:169px;width:61px;height:19px;line-height:19px;"><span>Wybierz</span></div>
<div style="left:730px;top:169px;width:60px;height:20px;background:#f0f0f0;box-shadow:inset -1px -1px 0 #696969, inset 1px 1px 0 #fff, inset -2px -2px 0 #a0a0a0;"></div>
<div class="t g c" style="left:731px;top:169px;width:59px;height:19px;line-height:19px;"><span>Anuluj</span></div>
<div style="left:370px;top:190px;width:618px;height:381px;background:#fff;"></div>
<div style="left:508px;top:210px;width:41px;height:361px;background:#c3c3c3;"></div>
<div style="left:370px;top:310px;width:618px;height:19px;background:#3399ff;"></div>
<div style="left:370px;top:190px;width:53px;height:19px;background:#f0f0f0;box-shadow:inset -2px -2px 0 #a0a0a0, inset 1px 1px 0 #fff;"></div>
<div style="left:423px;top:190px;width:1px;height:381px;background:#696969;"></div>
<div style="left:424px;top:190px;width:83px;height:19px;background:#f0f0f0;box-shadow:inset -2px -2px 0 #a0a0a0, inset 1px 1px 0 #fff;"></div>
<div class="t g c" style="left:426px;top:190px;width:79px;height:18px;line-height:18px;overflow:hidden;"><span>Druk</span></div>
<div style="left:507px;top:190px;width:1px;height:381px;background:#696969;"></div>
<div style="left:508px;top:190px;width:41px;height:19px;background:#f0f0f0;box-shadow:inset -2px -2px 0 #a0a0a0, inset 1px 1px 0 #fff;"></div>
<div class="t g c" style="left:510px;top:190px;width:37px;height:18px;line-height:18px;overflow:hidden;"><span>Konto</span></div>
<div style="left:549px;top:190px;width:1px;height:381px;background:#696969;"></div>
<div style="left:550px;top:190px;width:29px;height:19px;background:#f0f0f0;box-shadow:inset -2px -2px 0 #a0a0a0, inset 1px 1px 0 #fff;"></div>
<div class="t g c" style="left:552px;top:190px;width:25px;height:18px;line-height:18px;overflow:hidden;"><span>k</span></div>
<div style="left:579px;top:190px;width:1px;height:381px;background:#696969;"></div>
<div style="left:580px;top:190px;width:17px;height:19px;background:#f0f0f0;box-shadow:inset -2px -2px 0 #a0a0a0, inset 1px 1px 0 #fff;"></div>
<div class="t g c" style="left:582px;top:190px;width:13px;height:18px;line-height:18px;overflow:hidden;"><span>zn</span></div>
<div style="left:597px;top:190px;width:1px;height:381px;background:#696969;"></div>
<div style="left:598px;top:190px;width:17px;height:19px;background:#f0f0f0;box-shadow:inset -2px -2px 0 #a0a0a0, inset 1px 1px 0 #fff;"></div>
<div class="t g c" style="left:600px;top:190px;width:13px;height:18px;line-height:18px;overflow:hidden;"><span>P</span></div>
<div style="left:615px;top:190px;width:1px;height:381px;background:#696969;"></div>
<div style="left:616px;top:190px;width:17px;height:19px;background:#f0f0f0;box-shadow:inset -2px -2px 0 #a0a0a0, inset 1px 1px 0 #fff;"></div>
<div class="t g c" style="left:618px;top:190px;width:13px;height:18px;line-height:18px;overflow:hidden;"><span>B</span></div>
<div style="left:633px;top:190px;width:1px;height:381px;background:#696969;"></div>
<div style="left:634px;top:190px;width:35px;height:19px;background:#f0f0f0;box-shadow:inset -2px -2px 0 #a0a0a0, inset 1px 1px 0 #fff;"></div>
<div class="t g c" style="left:636px;top:190px;width:31px;height:18px;line-height:18px;overflow:hidden;"><span>zapł.</span></div>
<div style="left:669px;top:190px;width:1px;height:381px;background:#696969;"></div>
<div style="left:670px;top:190px;width:17px;height:19px;background:#f0f0f0;box-shadow:inset -2px -2px 0 #a0a0a0, inset 1px 1px 0 #fff;"></div>
<div class="t g c" style="left:672px;top:190px;width:13px;height:18px;line-height:18px;overflow:hidden;"><span>O</span></div>
<div style="left:687px;top:190px;width:1px;height:381px;background:#696969;"></div>
<div style="left:688px;top:190px;width:17px;height:19px;background:#f0f0f0;box-shadow:inset -2px -2px 0 #a0a0a0, inset 1px 1px 0 #fff;"></div>
<div class="t g c" style="left:690px;top:190px;width:13px;height:18px;line-height:18px;overflow:hidden;"><span>S</span></div>
<div style="left:705px;top:190px;width:1px;height:381px;background:#696969;"></div>
<div style="left:706px;top:190px;width:17px;height:19px;background:#f0f0f0;box-shadow:inset -2px -2px 0 #a0a0a0, inset 1px 1px 0 #fff;"></div>
<div class="t g c" style="left:708px;top:190px;width:13px;height:18px;line-height:18px;overflow:hidden;"><span>nD</span></div>
<div style="left:723px;top:190px;width:1px;height:381px;background:#696969;"></div>
<div style="left:724px;top:190px;width:35px;height:19px;background:#f0f0f0;box-shadow:inset -2px -2px 0 #a0a0a0, inset 1px 1px 0 #fff;"></div>
<div class="t g c" style="left:726px;top:190px;width:31px;height:18px;line-height:18px;overflow:hidden;"><span style="transform:scaleX(1.0)">VATue</span></div>
<div style="left:759px;top:190px;width:1px;height:381px;background:#696969;"></div>
<div style="left:760px;top:190px;width:41px;height:19px;background:#f0f0f0;box-shadow:inset -2px -2px 0 #a0a0a0, inset 1px 1px 0 #fff;"></div>
<div class="t g c" style="left:762px;top:190px;width:37px;height:18px;line-height:18px;overflow:hidden;"><span style="transform:scaleX(1.0)">VATueL</span></div>
<div style="left:801px;top:190px;width:1px;height:381px;background:#696969;"></div>
<div style="left:802px;top:190px;width:35px;height:19px;background:#f0f0f0;box-shadow:inset -2px -2px 0 #a0a0a0, inset 1px 1px 0 #fff;"></div>
<div class="t g c" style="left:804px;top:190px;width:31px;height:18px;line-height:18px;overflow:hidden;"><span>NIPue</span></div>
<div style="left:837px;top:190px;width:1px;height:381px;background:#696969;"></div>
<div style="left:838px;top:190px;width:29px;height:19px;background:#f0f0f0;box-shadow:inset -2px -2px 0 #a0a0a0, inset 1px 1px 0 #fff;"></div>
<div class="t g c" style="left:840px;top:190px;width:25px;height:18px;line-height:18px;overflow:hidden;"><span>bS</span></div>
<div style="left:867px;top:190px;width:1px;height:381px;background:#696969;"></div>
<div style="left:868px;top:190px;width:35px;height:19px;background:#f0f0f0;box-shadow:inset -2px -2px 0 #a0a0a0, inset 1px 1px 0 #fff;"></div>
<div class="t g c" style="left:870px;top:190px;width:31px;height:18px;line-height:18px;overflow:hidden;"><span>k.FW</span></div>
<div style="left:903px;top:190px;width:1px;height:381px;background:#696969;"></div>
<div style="left:904px;top:190px;width:17px;height:19px;background:#f0f0f0;box-shadow:inset -2px -2px 0 #a0a0a0, inset 1px 1px 0 #fff;"></div>
<div class="t g c" style="left:906px;top:190px;width:13px;height:18px;line-height:18px;overflow:hidden;"><span>rd</span></div>
<div style="left:921px;top:190px;width:1px;height:381px;background:#696969;"></div>
<div style="left:922px;top:190px;width:47px;height:19px;background:#f0f0f0;box-shadow:inset -2px -2px 0 #a0a0a0, inset 1px 1px 0 #fff;"></div>
<div class="t g c" style="left:924px;top:190px;width:43px;height:18px;line-height:18px;overflow:hidden;"><span>od</span></div>
<div style="left:969px;top:190px;width:1px;height:381px;background:#696969;"></div>
<div style="left:970px;top:190px;width:17px;height:19px;background:#f0f0f0;box-shadow:inset -2px -2px 0 #a0a0a0, inset 1px 1px 0 #fff;"></div>
<div class="t g c" style="left:972px;top:190px;width:13px;height:18px;line-height:18px;overflow:hidden;"><span>z.</span></div>
<div style="left:987px;top:190px;width:1px;height:381px;background:#696969;"></div>
<div style="left:370px;top:209px;width:618px;height:1px;background:#696969;"></div>
<div style="left:370px;top:229px;width:618px;height:1px;background:#696969;"></div>
<div style="left:370px;top:249px;width:618px;height:1px;background:#696969;"></div>
<div style="left:370px;top:269px;width:618px;height:1px;background:#696969;"></div>
<div style="left:370px;top:289px;width:618px;height:1px;background:#696969;"></div>
<div style="left:370px;top:309px;width:618px;height:1px;background:#696969;"></div>
<div style="left:370px;top:329px;width:618px;height:1px;background:#696969;"></div>
<div style="left:370px;top:349px;width:618px;height:1px;background:#696969;"></div>
<div style="left:370px;top:369px;width:618px;height:1px;background:#696969;"></div>
<div style="left:370px;top:389px;width:618px;height:1px;background:#696969;"></div>
<div style="left:370px;top:409px;width:618px;height:1px;background:#696969;"></div>
<div style="left:370px;top:429px;width:618px;height:1px;background:#696969;"></div>
<div style="left:370px;top:449px;width:618px;height:1px;background:#696969;"></div>
<div class="t g l" style="left:427px;top:211px;width:80px;height:19px;line-height:19px;overflow:hidden;"><span>stawka 0%</span></div>
<div class="t g c" style="left:670px;top:211px;width:17px;height:19px;line-height:19px;"><span>X</span></div>
<div class="t g l" style="left:427px;top:231px;width:80px;height:19px;line-height:19px;overflow:hidden;"><span>sprzedaż</span></div>
<div class="t g c" style="left:670px;top:231px;width:17px;height:19px;line-height:19px;"><span>X</span></div>
<div class="t g l" style="left:427px;top:251px;width:80px;height:19px;line-height:19px;overflow:hidden;"><span>eksport</span></div>
<div class="t g c" style="left:598px;top:251px;width:17px;height:19px;line-height:19px;"><span>X</span></div>
<div class="t g c" style="left:670px;top:251px;width:17px;height:19px;line-height:19px;"><span>X</span></div>
<div class="t g l" style="left:427px;top:271px;width:80px;height:19px;line-height:19px;overflow:hidden;"><span>Dost.usług</span></div>
<div class="t g c" style="left:670px;top:271px;width:17px;height:19px;line-height:19px;"><span>X</span></div>
<div class="t g c" style="left:802px;top:271px;width:35px;height:19px;line-height:19px;"><span>X</span></div>
<div class="t g l" style="left:427px;top:291px;width:80px;height:19px;line-height:19px;overflow:hidden;"><span>bez należn.</span></div>
<div class="t g c" style="left:550px;top:291px;width:29px;height:19px;line-height:19px;"><span>B</span></div>
<div class="t g c" style="left:670px;top:291px;width:17px;height:19px;line-height:19px;"><span>X</span></div>
<div class="t g l" style="left:427px;top:311px;width:80px;height:19px;line-height:19px;color:#fff;overflow:hidden;"><span>kasa fiskalna</span></div>
<div class="t g c" style="left:616px;top:311px;width:17px;height:19px;line-height:19px;color:#fff;"><span>X</span></div>
<div class="t g c" style="left:670px;top:311px;width:17px;height:19px;line-height:19px;color:#fff;"><span>X</span></div>
<div class="t g c" style="left:838px;top:311px;width:29px;height:19px;line-height:19px;color:#fff;"><span>X</span></div>
<div class="t g l" style="left:427px;top:331px;width:80px;height:19px;line-height:19px;overflow:hidden;"><span>spis</span></div>
<div class="t g c" style="left:670px;top:331px;width:17px;height:19px;line-height:19px;"><span>X</span></div>
<div class="t g l" style="left:427px;top:351px;width:80px;height:19px;line-height:19px;overflow:hidden;"><span>TaxFree</span></div>
<div class="t g c" style="left:670px;top:351px;width:17px;height:19px;line-height:19px;"><span>X</span></div>
<div class="t g l" style="left:427px;top:371px;width:80px;height:19px;line-height:19px;overflow:hidden;"><span>TaxFree</span></div>
<div class="t g c" style="left:670px;top:371px;width:17px;height:19px;line-height:19px;"><span>X</span></div>
<div class="t g l" style="left:427px;top:391px;width:80px;height:19px;line-height:19px;overflow:hidden;"><span>VAT nabywc</span></div>
<div class="t g c" style="left:670px;top:391px;width:17px;height:19px;line-height:19px;"><span>X</span></div>
<div class="t g c" style="left:802px;top:391px;width:35px;height:19px;line-height:19px;"><span>X</span></div>
<div class="t g l" style="left:427px;top:411px;width:80px;height:19px;line-height:19px;overflow:hidden;"><span>UE dostawa</span></div>
<div class="t g c" style="left:598px;top:411px;width:17px;height:19px;line-height:19px;"><span>X</span></div>
<div class="t g c" style="left:670px;top:411px;width:17px;height:19px;line-height:19px;"><span>X</span></div>
<div class="t g c" style="left:724px;top:411px;width:35px;height:19px;line-height:19px;"><span>X</span></div>
<div class="t g c" style="left:802px;top:411px;width:35px;height:19px;line-height:19px;"><span>X</span></div>
<div class="t g l" style="left:427px;top:431px;width:80px;height:19px;line-height:19px;overflow:hidden;"><span>zwolniona</span></div>
<div class="t g c" style="left:670px;top:431px;width:17px;height:19px;line-height:19px;"><span>X</span></div>
<div style="left:370px;top:250px;width:53px;height:19px;overflow:hidden"><div class="t g l" style="left:-5.9px;top:1px;height:19px;line-height:19px"><span style="transform:scaleX(0.87)">0%</span></div></div>
<div style="left:370px;top:270px;width:53px;height:19px;overflow:hidden"><div class="t g l" style="left:-5.2px;top:1px;height:19px;line-height:19px"><span style="transform:scaleX(0.82)">prawem do odl</span></div></div>
<div style="left:370px;top:390px;width:53px;height:19px;overflow:hidden"><div class="t g l" style="left:-5.5px;top:1px;height:19px;line-height:19px"><span style="transform:scaleX(0.87)">ywca</span></div></div>
<div style="left:970px;top:310px;width:17px;height:19px;background:repeating-conic-gradient(#000 0 25%,#ff8c00 0 50%) 0 0/2px 2px"></div>
<div style="left:972px;top:312px;width:13px;height:15px;background:#3399ff;"></div>
<div style="left:370px;top:571px;width:625px;height:20px;background:#f0f0f0;"></div>
<div style="left:959px;top:572px;width:17px;height:15px;background:#cdcdcd;"></div>
<svg style="left:375px;top:576px" width="7" height="8" viewBox="0 0 7 8"><path d="M6 0.5L2 4L6 7.5" fill="none" stroke="#505050" stroke-width="1.8"/></svg>
<svg style="left:982px;top:576px" width="7" height="8" viewBox="0 0 7 8"><path d="M1 0.5L5 4L1 7.5" fill="none" stroke="#505050" stroke-width="1.8"/></svg>
</body></html>
